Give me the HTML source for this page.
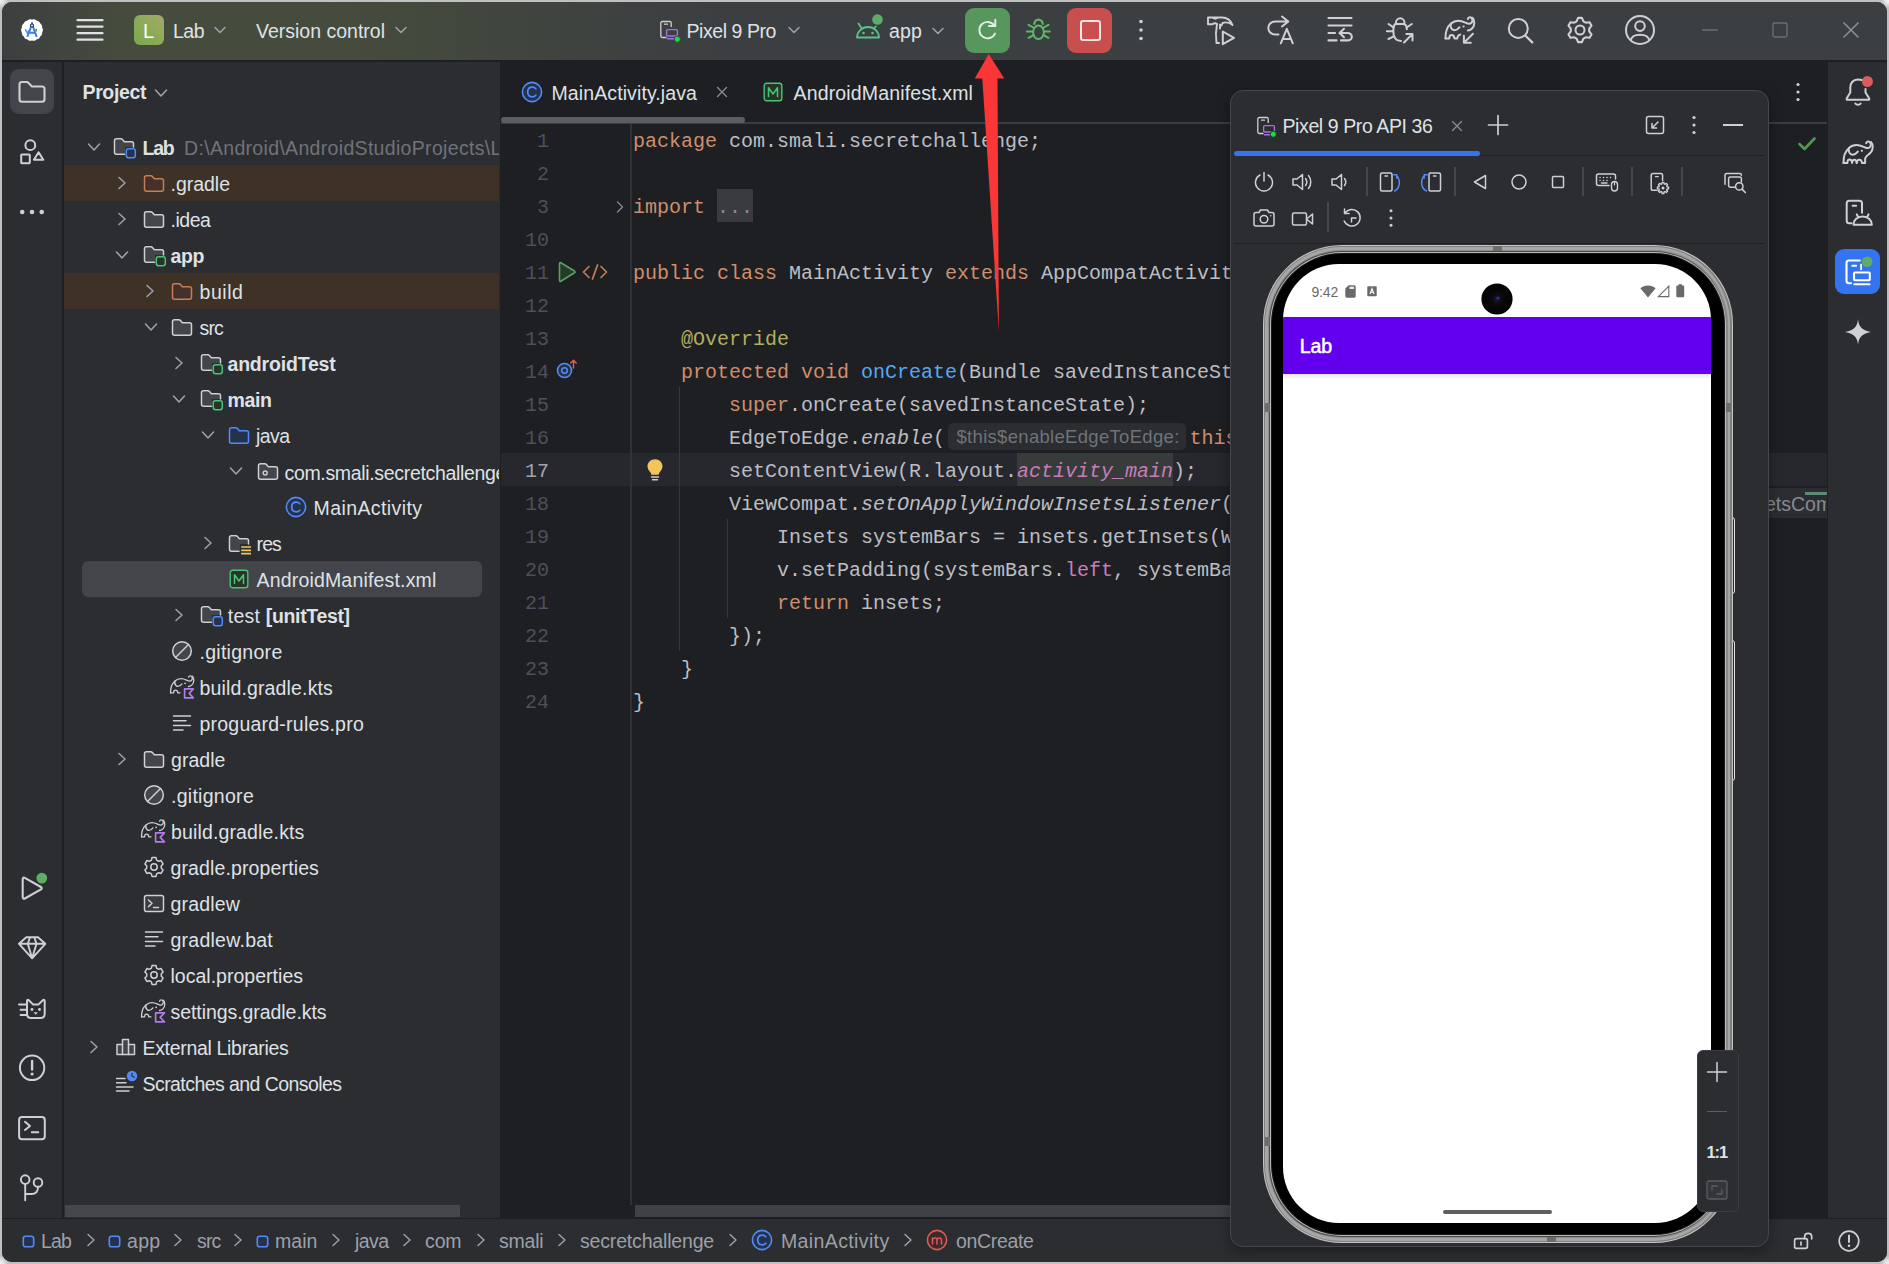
<!DOCTYPE html>
<html><head><meta charset="utf-8"><title>Lab - MainActivity.java</title><style>
html,body{margin:0;padding:0;}
body{width:1889px;height:1264px;overflow:hidden;background:radial-gradient(circle at 100% 0%,#f2f2f2 0,#f2f2f2 2px,rgba(194,194,194,0) 8px),radial-gradient(circle at 0% 0%,#ececec 0,#ececec 2px,rgba(194,194,194,0) 8px),radial-gradient(circle at 100% 100%,#ececec 0,#ececec 2px,rgba(194,194,194,0) 8px),radial-gradient(circle at 0% 100%,#ececec 0,#ececec 2px,rgba(194,194,194,0) 8px),#c0c0c0;font-family:"Liberation Sans",sans-serif;position:relative;}
#win{position:absolute;left:2px;top:2px;width:1885px;height:1260px;border-radius:10px;overflow:hidden;background:#2b2d30;}
#o{position:absolute;left:-2px;top:-2px;width:1889px;height:1264px;}
.t{position:absolute;white-space:pre;line-height:24px;height:24px;}
.b{position:absolute;}
.i{position:absolute;overflow:visible;}
.c{position:absolute;white-space:pre;font-family:"Liberation Mono",monospace;font-size:20px;line-height:33px;height:33px;color:#bcbec4;}
.k{color:#cf8e6d}.m{color:#56a8f5}.a{color:#b3ae60}.f{color:#c77dbb}.it{font-style:italic}
</style></head><body>
<div id="win"><div id="o">
<!-- part_bg -->
<div class="b" style="left:0px;top:0px;width:1889px;height:60px;background:linear-gradient(90deg,#3b3f40 0px,#40453f 60px,#454c3d 125px,#454c3d 330px,#41473e 480px,#3d4140 620px,#3c3f41 720px,#3c3f41 100%);"></div>
<div class="b" style="left:0px;top:60px;width:1889px;height:2px;background:#1e1f22;"></div>
<div class="b" style="left:0px;top:62px;width:62px;height:1157px;background:#2b2d30;"></div>
<div class="b" style="left:62px;top:62px;width:2px;height:1157px;background:#1e1f22;"></div>
<div class="b" style="left:64px;top:62px;width:436px;height:1157px;background:#2b2d30;"></div>
<div class="b" style="left:500px;top:62px;width:1px;height:1157px;background:#1e1f22;"></div>
<div class="b" style="left:501px;top:62px;width:1326px;height:1157px;background:#1e1f22;"></div>
<div class="b" style="left:1827px;top:62px;width:1px;height:1157px;background:#1e1f22;"></div>
<div class="b" style="left:1828px;top:62px;width:61px;height:1157px;background:#2b2d30;"></div>
<div class="b" style="left:0px;top:1218px;width:1889px;height:1px;background:#1e1f22;"></div>
<div class="b" style="left:0px;top:1219px;width:1889px;height:45px;background:#2b2d30;"></div>
<!-- part_title -->
<svg class="i" style="left:20px;top:18px;" width="24" height="24" viewBox="0 0 24 24" fill="none"><path d="M22.67 10.85 Q23.30 12.00 22.67 13.15 Q22.04 14.29 22.11 15.60 Q22.18 16.90 21.12 17.66 Q20.05 18.42 19.55 19.63 Q19.05 20.83 17.76 21.06 Q16.47 21.28 15.49 22.15 Q14.51 23.02 13.26 22.66 Q12.00 22.30 10.74 22.66 Q9.49 23.02 8.51 22.15 Q7.53 21.28 6.24 21.06 Q4.95 20.83 4.45 19.63 Q3.95 18.42 2.88 17.66 Q1.82 16.90 1.89 15.60 Q1.96 14.29 1.33 13.15 Q0.70 12.00 1.33 10.85 Q1.96 9.71 1.89 8.40 Q1.82 7.10 2.88 6.34 Q3.95 5.58 4.45 4.37 Q4.95 3.17 6.24 2.94 Q7.53 2.72 8.51 1.85 Q9.49 0.98 10.74 1.34 Q12.00 1.70 13.26 1.34 Q14.51 0.98 15.49 1.85 Q16.47 2.72 17.76 2.94 Q19.05 3.17 19.55 4.37 Q20.05 5.58 21.12 6.34 Q22.18 7.10 22.11 8.40 Q22.04 9.71 22.67 10.85 Z" fill="#fff"/>
<path d="M12 4.300 V6.300 M11.300 8 L7.300 18.800 M12.700 8 L16.700 18.800 M9 14.800 H15" stroke="#3b7cf0" stroke-width="2" stroke-linecap="butt"/>
<path d="M5.300 11.300 L7.600 15.300 L8.800 12.500" stroke="#4a8af5" stroke-width="1.500" fill="none"/>
<rect x="15.400" y="10.800" width="1.700" height="2.800" fill="#3dae4f"/>
<circle cx="12" cy="7.500" r="1.500" fill="#fff" stroke="#1f2a44" stroke-width="1.100"/></svg>
<svg class="i" style="left:76px;top:17px;" width="28" height="26" viewBox="0 0 28 26" fill="none"><path d="M1.500 3.2H26.500M1.500 9.700H26.500M1.500 16.200H26.500M1.500 22.700H26.500" stroke="#dfe1e5" stroke-width="2.200" stroke-linecap="round"/></svg>
<div class="b" style="left:134px;top:15px;width:30px;height:30px;background:linear-gradient(45deg,#7aa650 0%,#8dab57 50%,#a5a868 100%);border-radius:6px;"></div>
<div class="t" style="left:143px;top:18.5px;font-size:20px;color:#ffffff;">L</div>
<div class="t" style="left:173px;top:19px;font-size:19.5px;color:#dfe1e5;letter-spacing:-0.510px;">Lab</div>
<svg class="i" style="left:212px;top:22px;" width="16" height="16" viewBox="0 0 16 16" fill="none"><path d="M3 5.5 L8 10.5 L13 5.5" stroke="#9da0a8" stroke-width="1.6" stroke-linecap="round" stroke-linejoin="round"/></svg>
<div class="t" style="left:256px;top:19px;font-size:19.5px;color:#dfe1e5;letter-spacing:0.001px;">Version control</div>
<svg class="i" style="left:393px;top:22px;" width="16" height="16" viewBox="0 0 16 16" fill="none"><path d="M3 5.5 L8 10.5 L13 5.5" stroke="#9da0a8" stroke-width="1.6" stroke-linecap="round" stroke-linejoin="round"/></svg>
<svg class="i" style="left:658px;top:19px;" width="22" height="22" viewBox="0 0 22 22" fill="none"><path d="M8.5 18.500H4.200a1.400 1.400 0 0 1-1.400-1.400V3.900a1.400 1.400 0 0 1 1.400-1.400h7.600a1.400 1.400 0 0 1 1.400 1.400V8" stroke="#ced0d6" stroke-width="1.300" fill="none"/>
<path d="M6.5 5.200h3" stroke="#ced0d6" stroke-width="1.300" stroke-linecap="round"/>
<rect x="8.600" y="10.600" width="10.800" height="6.400" rx="1.200" stroke="#a571e6" stroke-width="1.400" fill="#3c3f41"/>
<path d="M9.500 19.700h9" stroke="#a571e6" stroke-width="1.400" stroke-linecap="round"/>
<circle cx="19.300" cy="20.200" r="3.100" fill="#14e03c" stroke="#3c3f41" stroke-width="1"/></svg>
<div class="t" style="left:686.5px;top:19px;font-size:19.5px;color:#dfe1e5;letter-spacing:-0.435px;">Pixel 9 Pro</div>
<svg class="i" style="left:786px;top:22px;" width="16" height="16" viewBox="0 0 16 16" fill="none"><path d="M3 5.5 L8 10.5 L13 5.5" stroke="#9da0a8" stroke-width="1.6" stroke-linecap="round" stroke-linejoin="round"/></svg>
<svg class="i" style="left:853px;top:16px;" width="30" height="26" viewBox="0 0 30 26" fill="none"><path d="M4 21.500 a11 10.500 0 0 1 22 0 Z" stroke="#55c38a" stroke-width="1.800" fill="none" stroke-linejoin="round"/>
<path d="M8 11.500 L5.500 7.500 M22 11.500 L24.500 7.500" stroke="#55c38a" stroke-width="1.800" stroke-linecap="round"/>
<circle cx="10.500" cy="17" r="1.300" fill="#55c38a"/><circle cx="19.500" cy="17" r="1.300" fill="#55c38a"/>
<circle cx="24.500" cy="3.500" r="6.600" fill="#3c3f41"/><circle cx="24.500" cy="3.500" r="5.300" fill="#5fad65"/></svg>
<div class="t" style="left:889px;top:19px;font-size:19.5px;color:#dfe1e5;letter-spacing:0.156px;">app</div>
<svg class="i" style="left:930px;top:22.5px;" width="16" height="16" viewBox="0 0 16 16" fill="none"><path d="M3 5.5 L8 10.5 L13 5.5" stroke="#9da0a8" stroke-width="1.6" stroke-linecap="round" stroke-linejoin="round"/></svg>
<div class="b" style="left:965px;top:7.5px;width:45px;height:45px;background:#57965c;border-radius:9px;"></div>
<svg class="i" style="left:970px;top:12px" width="36" height="36" viewBox="970 12 36 36" fill="none"><path d="M995 33.600 A8.200 8.200 0 1 1 994.300 25.400" stroke="#e3ede4" stroke-width="1.900" fill="none" stroke-linecap="round"/><path d="M995.300 19.800 V26 H989" stroke="#e3ede4" stroke-width="1.900" fill="none" stroke-linecap="round" stroke-linejoin="miter"/></svg>
<svg class="i" style="left:1020px;top:10px" width="40" height="42" viewBox="1020 10 40 42" fill="none"><ellipse cx="1038.500" cy="32.300" rx="5.400" ry="6.700" stroke="#5fb865" stroke-width="2"/><path d="M1034.200 24.800 C1034.200 17.800 1042.800 17.800 1042.800 24.800" stroke="#5fb865" stroke-width="2.200" fill="none"/><path d="M1028.500 24.800 L1033.300 27.500 M1048.500 24.800 L1043.700 27.500 M1027 31.500 H1032.800 M1044.200 31.500 H1049.800 M1028.500 37.800 L1033.500 35.200 M1048.500 37.800 L1043.500 35.200" stroke="#5fb865" stroke-width="2" stroke-linecap="round"/></svg>
<div class="b" style="left:1067px;top:7.5px;width:45px;height:45px;background:#c94f4f;border-radius:9px;"></div>
<div class="b" style="left:1079.5px;top:19.5px;width:21px;height:21px;background:transparent;border:2px solid #f5e6e6;border-radius:3px;box-sizing:border-box;"></div>
<svg class="i" style="left:1137.5px;top:17px;" width="6" height="26" viewBox="0 0 6 26" fill="none"><circle cx="3" cy="4.500" r="1.800" fill="#ced0d6"/><circle cx="3" cy="13" r="1.800" fill="#ced0d6"/><circle cx="3" cy="21.500" r="1.800" fill="#ced0d6"/></svg>
<!-- part_title2 -->
<svg class="i" style="left:1200px;top:10px" width="45" height="42" viewBox="1200 10 45 42" fill="none"><path d="M1208 17.500 H1222 C1227 17.500 1230.500 20 1232.500 25 C1229.500 22.500 1226 21.800 1222.500 23 L1221.500 25.500 M1208 17.500 V24.200 H1212.500 C1214 23 1215.500 23 1217 24 M1213 17.800 C1214.500 19 1216 19 1217.500 17.800 M1217 24 C1216 29 1215.500 36 1216.500 43 H1219 M1220 24.500 V28.500" stroke="#ced0d6" stroke-width="1.9" stroke-linecap="round" stroke-linejoin="round" fill="none" /><path d="M1222.800 31.500 L1234 37.800 L1222.800 44.200 Z" stroke="#ced0d6" stroke-width="2" stroke-linecap="round" stroke-linejoin="round" fill="none" /></svg>
<svg class="i" style="left:1260px;top:10px" width="40" height="42" viewBox="1260 10 40 42" fill="none"><path d="M1278.500 34.500 H1275 C1271 34.500 1268.300 31.500 1268.300 28 C1268.300 24.500 1271 21.500 1275 21.500 H1288 M1282 16.500 L1288.300 21.500 L1282 26.500" stroke="#ced0d6" stroke-width="2" stroke-linecap="round" stroke-linejoin="round" fill="none" /><path d="M1280.800 43.300 L1286.800 28.800 L1292.800 43.300 M1283 39 H1290.600" stroke="#ced0d6" stroke-width="2" stroke-linecap="round" stroke-linejoin="round" fill="none" /></svg>
<svg class="i" style="left:1320px;top:10px" width="40" height="42" viewBox="1320 10 40 42" fill="none"><path d="M1328.500 18 H1351.500 M1328.500 25.500 H1351.500 M1328.500 33 H1335 M1328.500 40.400 H1336.500" stroke="#ced0d6" stroke-width="2.2" stroke-linecap="round" stroke-linejoin="round" fill="none" /><path d="M1344 28.800 L1339.500 33 L1344 37.200 M1339.800 33 H1347.500 C1350 33 1351.800 34.600 1351.800 36.700 C1351.800 38.800 1350 40.400 1347.500 40.400 H1341" stroke="#ced0d6" stroke-width="2.1" stroke-linecap="round" stroke-linejoin="round" fill="none" /></svg>
<svg class="i" style="left:1380px;top:10px" width="40" height="42" viewBox="1380 10 40 42" fill="none"><path d="M1395.800 23.500 C1395.800 16.500 1404.600 16.500 1404.600 23.500 M1395.300 24 H1403 C1405.500 24 1406.800 26 1406.800 29.300 M1395.300 24 C1393.800 25.500 1393.300 27.500 1393.300 31 C1393.300 37.500 1396 41 1401 41" stroke="#ced0d6" stroke-width="2" stroke-linecap="round" stroke-linejoin="round" fill="none" /><path d="M1388.500 24 L1393.500 27.300 M1386.800 31.300 H1393 M1388.500 39 L1393.800 36.300 M1411.800 24 L1407 27.300" stroke="#ced0d6" stroke-width="2" stroke-linecap="round" stroke-linejoin="round" fill="none" /><path d="M1404 42.500 L1412.500 34 M1406.300 34 H1412.500 V40.500" stroke="#ced0d6" stroke-width="2" stroke-linecap="round" stroke-linejoin="round" fill="none" /></svg>
<svg class="i" style="left:1440px;top:10px" width="40" height="42" viewBox="1440 10 40 42" fill="none"><path d="M1445.500 38.400 C1445.300 31.500 1447.500 26.500 1451 23.600 C1454.500 20.300 1460 20 1465.400 22.600 C1467.500 23.700 1470 24.300 1471.500 22.800 C1473.300 21 1472.300 17.500 1470.200 17.300 C1468.800 17.200 1468 18 1467.800 19" stroke="#ced0d6" stroke-width="2" stroke-linecap="round" stroke-linejoin="round" fill="none" /><path d="M1472.500 17.800 C1475 20 1475 25.500 1472 28.500 C1470.800 29.700 1469.300 30.400 1467.800 30.500" stroke="#ced0d6" stroke-width="2" stroke-linecap="round" stroke-linejoin="round" fill="none" /><path d="M1451 23.600 C1450.300 26 1451 28.500 1452.600 29.700 C1454.800 31 1457.500 29.800 1459.600 27.200" stroke="#ced0d6" stroke-width="2" stroke-linecap="round" stroke-linejoin="round" fill="none" /><path d="M1445.500 38.400 H1449.300 C1449.300 36.500 1450.300 35 1451.600 35 C1453 35 1454.300 36.500 1454.500 38.400 H1457.200 C1457.500 36.300 1458.600 35 1460.200 34.600" stroke="#ced0d6" stroke-width="2" stroke-linecap="round" stroke-linejoin="round" fill="none" /><circle cx="1463.600" cy="26.500" r="1.100" fill="#ced0d6"/><path d="M1473 33.800 L1464 42.600 M1463.900 35.800 V42.700 H1470.800" stroke="#ced0d6" stroke-width="2" stroke-linecap="round" stroke-linejoin="round" fill="none" /></svg>
<svg class="i" style="left:1500px;top:10px" width="40" height="42" viewBox="1500 10 40 42" fill="none"><circle cx="1518.300" cy="28.400" r="9.500" stroke="#ced0d6" stroke-width="2"/><path d="M1525.200 35.500 L1532.300 42.400" stroke="#ced0d6" stroke-width="2.2" stroke-linecap="round" stroke-linejoin="round" fill="none" /></svg>
<svg class="i" style="left:1560px;top:10px" width="40" height="42" viewBox="1560 10 40 42" fill="none"><path d="M1578.08 17.85 L1581.92 17.85 L1583.42 21.35 L1585.78 22.71 L1589.56 22.26 L1591.48 25.59 L1589.20 28.64 L1589.20 31.36 L1591.48 34.41 L1589.56 37.74 L1585.78 37.29 L1583.42 38.65 L1581.92 42.15 L1578.08 42.15 L1576.58 38.65 L1574.22 37.29 L1570.44 37.74 L1568.52 34.41 L1570.80 31.36 L1570.80 28.64 L1568.52 25.59 L1570.44 22.26 L1574.22 22.71 L1576.58 21.35 Z" stroke="#ced0d6" stroke-width="2.1" stroke-linecap="round" stroke-linejoin="round" fill="none" /><circle cx="1580" cy="30" r="4.500" stroke="#ced0d6" stroke-width="2"/></svg>
<svg class="i" style="left:1620px;top:10px" width="40" height="42" viewBox="1620 10 40 42" fill="none"><circle cx="1640" cy="30" r="14" stroke="#ced0d6" stroke-width="2"/><circle cx="1640" cy="26.100" r="4.800" stroke="#ced0d6" stroke-width="2"/><path d="M1630.800 40 C1632.500 33 1647.500 33 1649.200 40" stroke="#ced0d6" stroke-width="2" stroke-linecap="round" stroke-linejoin="round" fill="none" /></svg>
<svg class="i" style="left:1701px;top:21px;" width="18" height="18" viewBox="0 0 18 18" fill="none"><path d="M1 9H17" stroke="#6b6e73" stroke-width="1.300"/></svg>
<svg class="i" style="left:1771px;top:21px;" width="18" height="18" viewBox="0 0 18 18" fill="none"><rect x="2" y="2" width="14" height="14" rx="1.500" stroke="#6b6e73" stroke-width="1.300"/></svg>
<svg class="i" style="left:1842px;top:21px;" width="18" height="18" viewBox="0 0 18 18" fill="none"><path d="M1.500 1.500L16.500 16.500M16.500 1.500L1.500 16.500" stroke="#8e9093" stroke-width="1.500"/></svg>
<!-- part_left -->
<div class="b" style="left:10px;top:69px;width:44px;height:45px;background:#43454a;border-radius:9px;"></div>
<svg class="i" style="left:12px;top:72px" width="40" height="40" viewBox="12 72 40 40" fill="none"><path d="M19.500 84.500 C19.500 83 20.500 82 22 82 H27.500 L32 86.500 H42 C43.500 86.500 44.500 87.500 44.500 89 V99.200 C44.500 100.700 43.500 101.700 42 101.700 H22 C20.500 101.700 19.500 100.700 19.500 99.200 Z" stroke="#ced0d6" stroke-width="2.1" stroke-linecap="round" stroke-linejoin="round" fill="none" /></svg>
<svg class="i" style="left:12px;top:132px" width="40" height="40" viewBox="12 132 40 40" fill="none"><circle cx="30.300" cy="145.200" r="4.900" stroke="#ced0d6" stroke-width="2"/><rect x="21.200" y="154.600" width="8.600" height="8.600" rx="0.600" stroke="#ced0d6" stroke-width="2"/><path d="M38.600 152.300 L43.300 159.800 H33.900 Z" stroke="#ced0d6" stroke-width="2" stroke-linecap="round" stroke-linejoin="round" fill="none" /></svg>
<svg class="i" style="left:12px;top:202px" width="40" height="20" viewBox="12 202 40 20" fill="none"><circle cx="22.200" cy="212" r="2.300" fill="#ced0d6"/><circle cx="32" cy="212" r="2.300" fill="#ced0d6"/><circle cx="41.700" cy="212" r="2.300" fill="#ced0d6"/></svg>
<svg class="i" style="left:12px;top:868px" width="40" height="40" viewBox="12 868 40 40" fill="none"><path d="M22.700 879 C22.700 877.800 23.800 877.200 24.800 877.800 L41 887 C42 887.600 42 888.700 41 889.300 L24.800 898.500 C23.800 899.100 22.700 898.500 22.700 897.300 Z" stroke="#ced0d6" stroke-width="2.1" stroke-linecap="round" stroke-linejoin="round" fill="none" /><circle cx="41.800" cy="878.100" r="6.800" fill="#2b2d30"/><circle cx="41.800" cy="878.100" r="5.400" fill="#5fad65"/></svg>
<svg class="i" style="left:12px;top:928px" width="40" height="40" viewBox="12 928 40 40" fill="none"><path d="M19 943.800 L26.300 937.200 H38 L45.300 943.800 L32.100 958.300 Z M19 943.800 H45.300 M27.800 943.800 L30 937.200 M36.500 943.800 L34.300 937.200 M27.800 943.800 L32.100 958.300 L36.500 943.800" stroke="#ced0d6" stroke-width="1.9" stroke-linecap="round" stroke-linejoin="round" fill="none" /></svg>
<svg class="i" style="left:12px;top:990px" width="40" height="40" viewBox="12 990 40 40" fill="none"><path d="M27 1015 V1001 C27 999.800 28 999.400 28.800 1000.200 L33.200 1004.600 H38.300 L42.800 1000.200 C43.600 999.400 44.700 999.800 44.700 1001 V1014 C44.700 1016.500 43 1018 40.500 1018 H31 C28.500 1018 27 1016.500 27 1014" stroke="#ced0d6" stroke-width="2" stroke-linecap="round" stroke-linejoin="round" fill="none" /><path d="M19 1004.600 H27 M20.600 1009.800 H27 M20.600 1015 H27" stroke="#ced0d6" stroke-width="2" stroke-linecap="round" stroke-linejoin="round" fill="none" /><circle cx="32" cy="1009.500" r="1.400" fill="#ced0d6"/><circle cx="39.500" cy="1009.500" r="1.400" fill="#ced0d6"/><path d="M33.600 1012.300 H37.800 L35.700 1014.800 Z" fill="#ced0d6"/></svg>
<svg class="i" style="left:12px;top:1048px" width="40" height="40" viewBox="12 1048 40 40" fill="none"><circle cx="32.100" cy="1067.800" r="12.200" stroke="#ced0d6" stroke-width="2"/><path d="M32.100 1061 V1069.500" stroke="#ced0d6" stroke-width="2.4" stroke-linecap="round" stroke-linejoin="round" fill="none" /><circle cx="32.100" cy="1074" r="1.600" fill="#ced0d6"/></svg>
<svg class="i" style="left:12px;top:1108px" width="40" height="40" viewBox="12 1108 40 40" fill="none"><rect x="19.100" y="1117" width="25.700" height="22.200" rx="3" stroke="#ced0d6" stroke-width="2"/><path d="M25 1121.800 L30 1126 L25 1130 M31.800 1132.200 H38.300" stroke="#ced0d6" stroke-width="2" stroke-linecap="round" stroke-linejoin="round" fill="none" /></svg>
<svg class="i" style="left:12px;top:1168px" width="40" height="40" viewBox="12 1168 40 40" fill="none"><circle cx="25.200" cy="1179.600" r="4.300" stroke="#ced0d6" stroke-width="1.900"/><circle cx="38" cy="1182.500" r="4.300" stroke="#ced0d6" stroke-width="1.900"/><path d="M25.200 1184 V1200.300 M38 1187 C38 1191 36 1194 31.500 1194 H25.200" stroke="#ced0d6" stroke-width="1.9" stroke-linecap="round" stroke-linejoin="round" fill="none" /></svg>
<!-- part_tree -->
<div class="t" style="left:82.5px;top:80px;font-size:19.5px;color:#dfe1e5;font-weight:bold;letter-spacing:-0.373px;">Project</div>
<svg class="i" style="left:153px;top:86.5px;" width="16" height="12" viewBox="0 0 16 12" fill="none"><path d="M2.500 3 L8 9 L13.500 3" stroke="#9da0a8" stroke-width="1.6" stroke-linecap="round" stroke-linejoin="round" fill="none" /></svg>
<div class="b" style="left:64px;top:165px;width:436px;height:36px;background:#3d3225;"></div>
<div class="b" style="left:64px;top:273px;width:436px;height:36px;background:#3d3225;"></div>
<div class="b" style="left:82px;top:561px;width:400px;height:36px;background:#43454a;border-radius:6px;"></div>
<svg class="i" style="left:86px;top:141px;" width="16" height="12" viewBox="0 0 16 12" fill="none"><path d="M2.500 3 L8 9 L13.500 3" stroke="#9da0a8" stroke-width="1.6" stroke-linecap="round" stroke-linejoin="round" fill="none" /></svg>
<svg class="i" style="left:113.3px;top:137.2px;" width="22" height="19" viewBox="0 0 22 19" fill="none"><path d="M2.200 3 H8 L11 5.500 H19.800 V10 H12 V16.500 H2.200 Z" fill="#43454a"/><path d="M11.500 17.200 H3.500 C2.300 17.200 1.500 16.400 1.500 15.200 V3.800 C1.500 2.600 2.300 1.800 3.500 1.800 H7.800 C8.500 1.800 9 2 9.400 2.500 L11.300 4.800 H18.500 C19.700 4.800 20.500 5.600 20.500 6.800 V10" stroke="#ced0d6" stroke-width="1.5" stroke-linecap="round" stroke-linejoin="round" fill="none" /><rect x="13.300" y="11.800" width="9" height="9" rx="2.200" stroke="#548af7" stroke-width="1.500" fill="#25324d"/></svg>
<div class="t" style="left:142.5px;top:136px;font-size:19.5px;color:#dfe1e5;font-weight:bold;letter-spacing:-1.219px;">Lab</div>
<div class="b" style="left:184px;top:134px;width:316px;height:28px;overflow:hidden"><div class="t" style="left:0px;top:2px;font-size:19.5px;color:#6f737a;letter-spacing:0.322px;">D:\Android\AndroidStudioProjects\Lab</div></div>
<svg class="i" style="left:115.5px;top:175px;" width="12" height="16" viewBox="0 0 12 16" fill="none"><path d="M3 2.500 L9 8 L3 13.500" stroke="#9da0a8" stroke-width="1.6" stroke-linecap="round" stroke-linejoin="round" fill="none" /></svg>
<svg class="i" style="left:143px;top:173.5px;" width="22" height="19" viewBox="0 0 22 19" fill="none"><path d="M1.500 3.800 C1.500 2.600 2.300 1.800 3.500 1.800 H7.800 C8.500 1.800 9 2 9.400 2.500 L11.300 4.800 H18.500 C19.700 4.800 20.500 5.600 20.500 6.800 V15.200 C20.500 16.400 19.700 17.200 18.500 17.200 H3.500 C2.300 17.200 1.500 16.400 1.500 15.200 Z" stroke="#c77d55" stroke-width="1.5" stroke-linecap="round" stroke-linejoin="round" fill="#45302b" /></svg>
<div class="t" style="left:170.5px;top:172px;font-size:19.5px;color:#dfe1e5;letter-spacing:-0.018px;">.gradle</div>
<svg class="i" style="left:115.5px;top:211px;" width="12" height="16" viewBox="0 0 12 16" fill="none"><path d="M3 2.500 L9 8 L3 13.500" stroke="#9da0a8" stroke-width="1.6" stroke-linecap="round" stroke-linejoin="round" fill="none" /></svg>
<svg class="i" style="left:143px;top:209.5px;" width="22" height="19" viewBox="0 0 22 19" fill="none"><path d="M1.500 3.800 C1.500 2.600 2.300 1.800 3.500 1.800 H7.800 C8.500 1.800 9 2 9.400 2.500 L11.300 4.800 H18.500 C19.700 4.800 20.500 5.600 20.500 6.800 V15.200 C20.500 16.400 19.700 17.200 18.500 17.200 H3.500 C2.300 17.200 1.500 16.400 1.500 15.200 Z" stroke="#ced0d6" stroke-width="1.5" stroke-linecap="round" stroke-linejoin="round" fill="#43454a" /></svg>
<div class="t" style="left:170.5px;top:208px;font-size:19.5px;color:#dfe1e5;letter-spacing:-0.456px;">.idea</div>
<svg class="i" style="left:114px;top:249px;" width="16" height="12" viewBox="0 0 16 12" fill="none"><path d="M2.500 3 L8 9 L13.500 3" stroke="#9da0a8" stroke-width="1.6" stroke-linecap="round" stroke-linejoin="round" fill="none" /></svg>
<svg class="i" style="left:143px;top:245.2px;" width="22" height="19" viewBox="0 0 22 19" fill="none"><path d="M2.200 3 H8 L11 5.500 H19.800 V10 H12 V16.500 H2.200 Z" fill="#43454a"/><path d="M11.500 17.200 H3.500 C2.300 17.200 1.500 16.400 1.500 15.200 V3.800 C1.500 2.600 2.300 1.800 3.500 1.800 H7.800 C8.500 1.800 9 2 9.400 2.500 L11.300 4.800 H18.500 C19.700 4.800 20.500 5.600 20.500 6.800 V10" stroke="#ced0d6" stroke-width="1.5" stroke-linecap="round" stroke-linejoin="round" fill="none" /><rect x="13.300" y="11.800" width="9" height="9" rx="2.200" stroke="#4cc27a" stroke-width="1.500" fill="#253627"/></svg>
<div class="t" style="left:170.5px;top:244px;font-size:19.5px;color:#dfe1e5;font-weight:bold;letter-spacing:-0.385px;">app</div>
<svg class="i" style="left:144px;top:283px;" width="12" height="16" viewBox="0 0 12 16" fill="none"><path d="M3 2.500 L9 8 L3 13.500" stroke="#9da0a8" stroke-width="1.6" stroke-linecap="round" stroke-linejoin="round" fill="none" /></svg>
<svg class="i" style="left:171px;top:281.5px;" width="22" height="19" viewBox="0 0 22 19" fill="none"><path d="M1.500 3.800 C1.500 2.600 2.300 1.800 3.500 1.800 H7.800 C8.500 1.800 9 2 9.400 2.500 L11.300 4.800 H18.500 C19.700 4.800 20.500 5.600 20.500 6.800 V15.200 C20.500 16.400 19.700 17.200 18.500 17.200 H3.500 C2.300 17.200 1.500 16.400 1.500 15.200 Z" stroke="#c77d55" stroke-width="1.5" stroke-linecap="round" stroke-linejoin="round" fill="#45302b" /></svg>
<div class="t" style="left:199.5px;top:280px;font-size:19.5px;color:#dfe1e5;letter-spacing:0.562px;">build</div>
<svg class="i" style="left:142.5px;top:321px;" width="16" height="12" viewBox="0 0 16 12" fill="none"><path d="M2.500 3 L8 9 L13.500 3" stroke="#9da0a8" stroke-width="1.6" stroke-linecap="round" stroke-linejoin="round" fill="none" /></svg>
<svg class="i" style="left:171px;top:317.5px;" width="22" height="19" viewBox="0 0 22 19" fill="none"><path d="M1.500 3.800 C1.500 2.600 2.300 1.800 3.500 1.800 H7.800 C8.500 1.800 9 2 9.400 2.500 L11.300 4.800 H18.500 C19.700 4.800 20.500 5.600 20.500 6.800 V15.200 C20.500 16.400 19.700 17.200 18.500 17.200 H3.500 C2.300 17.200 1.500 16.400 1.500 15.200 Z" stroke="#ced0d6" stroke-width="1.5" stroke-linecap="round" stroke-linejoin="round" fill="#43454a" /></svg>
<div class="t" style="left:199.5px;top:316px;font-size:19.5px;color:#dfe1e5;letter-spacing:-0.833px;">src</div>
<svg class="i" style="left:172.5px;top:355px;" width="12" height="16" viewBox="0 0 12 16" fill="none"><path d="M3 2.500 L9 8 L3 13.500" stroke="#9da0a8" stroke-width="1.6" stroke-linecap="round" stroke-linejoin="round" fill="none" /></svg>
<svg class="i" style="left:200px;top:353.2px;" width="22" height="19" viewBox="0 0 22 19" fill="none"><path d="M2.200 3 H8 L11 5.500 H19.800 V10 H12 V16.500 H2.200 Z" fill="#43454a"/><path d="M11.500 17.200 H3.500 C2.300 17.200 1.500 16.400 1.500 15.200 V3.800 C1.500 2.600 2.300 1.800 3.500 1.800 H7.800 C8.500 1.800 9 2 9.400 2.500 L11.300 4.800 H18.500 C19.700 4.800 20.500 5.600 20.500 6.800 V10" stroke="#ced0d6" stroke-width="1.5" stroke-linecap="round" stroke-linejoin="round" fill="none" /><rect x="13.300" y="11.800" width="9" height="9" rx="2.200" stroke="#4cc27a" stroke-width="1.500" fill="#253627"/></svg>
<div class="t" style="left:227.5px;top:352px;font-size:19.5px;color:#dfe1e5;font-weight:bold;letter-spacing:-0.193px;">androidTest</div>
<svg class="i" style="left:171px;top:393px;" width="16" height="12" viewBox="0 0 16 12" fill="none"><path d="M2.500 3 L8 9 L13.500 3" stroke="#9da0a8" stroke-width="1.6" stroke-linecap="round" stroke-linejoin="round" fill="none" /></svg>
<svg class="i" style="left:200px;top:389.2px;" width="22" height="19" viewBox="0 0 22 19" fill="none"><path d="M2.200 3 H8 L11 5.500 H19.800 V10 H12 V16.500 H2.200 Z" fill="#43454a"/><path d="M11.500 17.200 H3.500 C2.300 17.200 1.500 16.400 1.500 15.200 V3.800 C1.500 2.600 2.300 1.800 3.500 1.800 H7.800 C8.500 1.800 9 2 9.400 2.500 L11.300 4.800 H18.500 C19.700 4.800 20.500 5.600 20.500 6.800 V10" stroke="#ced0d6" stroke-width="1.5" stroke-linecap="round" stroke-linejoin="round" fill="none" /><rect x="13.300" y="11.800" width="9" height="9" rx="2.200" stroke="#4cc27a" stroke-width="1.500" fill="#253627"/></svg>
<div class="t" style="left:227.5px;top:388px;font-size:19.5px;color:#dfe1e5;font-weight:bold;letter-spacing:-0.379px;">main</div>
<svg class="i" style="left:199.5px;top:429px;" width="16" height="12" viewBox="0 0 16 12" fill="none"><path d="M2.500 3 L8 9 L13.500 3" stroke="#9da0a8" stroke-width="1.6" stroke-linecap="round" stroke-linejoin="round" fill="none" /></svg>
<svg class="i" style="left:228px;top:425.5px;" width="22" height="19" viewBox="0 0 22 19" fill="none"><path d="M1.500 3.800 C1.500 2.600 2.300 1.800 3.500 1.800 H7.800 C8.500 1.800 9 2 9.400 2.500 L11.300 4.800 H18.500 C19.700 4.800 20.500 5.600 20.500 6.800 V15.200 C20.500 16.400 19.700 17.200 18.500 17.200 H3.500 C2.300 17.200 1.500 16.400 1.500 15.200 Z" stroke="#548af7" stroke-width="1.5" stroke-linecap="round" stroke-linejoin="round" fill="#25324d" /></svg>
<div class="t" style="left:256px;top:424px;font-size:19.5px;color:#dfe1e5;letter-spacing:-0.566px;">java</div>
<svg class="i" style="left:228px;top:465px;" width="16" height="12" viewBox="0 0 16 12" fill="none"><path d="M2.500 3 L8 9 L13.500 3" stroke="#9da0a8" stroke-width="1.6" stroke-linecap="round" stroke-linejoin="round" fill="none" /></svg>
<svg class="i" style="left:257px;top:461.5px;" width="22" height="19" viewBox="0 0 22 19" fill="none"><path d="M1.500 3.800 C1.500 2.600 2.300 1.800 3.500 1.800 H7.800 C8.500 1.800 9 2 9.400 2.500 L11.300 4.800 H18.500 C19.700 4.800 20.500 5.600 20.500 6.800 V15.200 C20.500 16.400 19.700 17.200 18.500 17.200 H3.500 C2.300 17.200 1.500 16.400 1.500 15.200 Z" stroke="#ced0d6" stroke-width="1.5" stroke-linecap="round" stroke-linejoin="round" fill="#43454a" /><circle cx="8.200" cy="11" r="2" stroke="#ced0d6" stroke-width="1.400"/></svg>
<div class="b" style="left:284px;top:458px;width:216px;height:28px;overflow:hidden"><div class="t" style="left:0.5px;top:3px;font-size:19.5px;color:#dfe1e5;letter-spacing:-0.331px;">com.smali.secretchallenge</div></div>
<svg class="i" style="left:285px;top:496px;" width="22" height="22" viewBox="0 0 22 22" fill="none"><circle cx="11" cy="11" r="9.600" stroke="#548af7" stroke-width="1.600" fill="#25324d"/><path d="M14.800 7.800 C13.800 6.600 12.600 6.200 11.300 6.200 C8.500 6.200 6.700 8.200 6.700 11 C6.700 13.800 8.500 15.800 11.300 15.800 C12.600 15.800 13.800 15.400 14.800 14.200" stroke="#548af7" stroke-width="1.7" stroke-linecap="round" stroke-linejoin="round" fill="none" /></svg>
<div class="t" style="left:313.5px;top:496px;font-size:19.5px;color:#dfe1e5;letter-spacing:0.415px;">MainActivity</div>
<svg class="i" style="left:201.5px;top:535px;" width="12" height="16" viewBox="0 0 12 16" fill="none"><path d="M3 2.500 L9 8 L3 13.500" stroke="#9da0a8" stroke-width="1.6" stroke-linecap="round" stroke-linejoin="round" fill="none" /></svg>
<svg class="i" style="left:227.5px;top:533.5px;" width="24" height="21" viewBox="0 0 24 21" fill="none"><path d="M2.200 3 H8 L11 5.500 H19.800 V10 H12 V16.500 H2.200 Z" fill="#43454a"/><path d="M11 17.200 H3.500 C2.300 17.200 1.500 16.400 1.500 15.200 V3.800 C1.500 2.600 2.300 1.800 3.500 1.800 H7.800 C8.500 1.800 9 2 9.400 2.500 L11.300 4.800 H18.500 C19.700 4.800 20.500 5.600 20.500 6.800 V10" stroke="#ced0d6" stroke-width="1.5" stroke-linecap="round" stroke-linejoin="round" fill="none" /><path d="M13.200 13 H23 M13.200 16.300 H23 M13.200 19.600 H23" stroke="#f2c55c" stroke-width="1.700"/></svg>
<div class="t" style="left:256.5px;top:532px;font-size:19.5px;color:#dfe1e5;letter-spacing:-0.865px;">res</div>
<svg class="i" style="left:229px;top:569px;" width="20" height="20" viewBox="0 0 20 20" fill="none"><rect x="1.200" y="1.200" width="17.600" height="17.600" rx="2.500" stroke="#4cc27a" stroke-width="1.400" fill="#253627"/><path d="M5.500 14.500 V5.800 L10 12 L14.500 5.800 V14.500" stroke="#4cc27a" stroke-width="1.5" stroke-linecap="round" stroke-linejoin="round" fill="none" /></svg>
<div class="t" style="left:256.5px;top:568px;font-size:19.5px;color:#dfe1e5;letter-spacing:0.176px;">AndroidManifest.xml</div>
<svg class="i" style="left:172.5px;top:607px;" width="12" height="16" viewBox="0 0 12 16" fill="none"><path d="M3 2.500 L9 8 L3 13.500" stroke="#9da0a8" stroke-width="1.6" stroke-linecap="round" stroke-linejoin="round" fill="none" /></svg>
<svg class="i" style="left:200px;top:605.2px;" width="22" height="19" viewBox="0 0 22 19" fill="none"><path d="M2.200 3 H8 L11 5.500 H19.800 V10 H12 V16.500 H2.200 Z" fill="#43454a"/><path d="M11.500 17.200 H3.500 C2.300 17.200 1.500 16.400 1.500 15.200 V3.800 C1.500 2.600 2.300 1.800 3.500 1.800 H7.800 C8.500 1.800 9 2 9.400 2.500 L11.300 4.800 H18.500 C19.700 4.800 20.500 5.600 20.500 6.800 V10" stroke="#ced0d6" stroke-width="1.5" stroke-linecap="round" stroke-linejoin="round" fill="none" /><rect x="13.300" y="11.800" width="9" height="9" rx="2.200" stroke="#548af7" stroke-width="1.500" fill="#25324d"/></svg>
<div class="t" style="left:227.8px;top:604px;font-size:19.5px;color:#dfe1e5;letter-spacing:0.228px;">test </div>
<div class="t" style="left:265.8px;top:604px;font-size:19.5px;color:#dfe1e5;font-weight:bold;letter-spacing:-0.348px;">[unitTest]</div>
<svg class="i" style="left:171px;top:640px;" width="22" height="22" viewBox="0 0 22 22" fill="none"><circle cx="11" cy="11" r="9.300" stroke="#ced0d6" stroke-width="1.500" fill="#43454a"/><path d="M4.500 17.500 L17.500 4.500" stroke="#ced0d6" stroke-width="1.5" stroke-linecap="round" stroke-linejoin="round" fill="none" /></svg>
<div class="t" style="left:199.5px;top:640px;font-size:19.5px;color:#dfe1e5;letter-spacing:0.278px;">.gitignore</div>
<svg class="i" style="left:167.5px;top:674px" width="30" height="28" viewBox="167.5 674 30 28" fill="none"><path d="M1445.500 38.400 C1445.300 31.500 1447.500 26.500 1451 23.600 C1454.500 20.300 1460 20 1465.400 22.600 C1467.500 23.700 1470 24.300 1471.500 22.800 C1473.300 21 1472.300 17.500 1470.200 17.300 C1468.800 17.200 1468 18 1467.800 19" stroke="#ced0d6" stroke-width="1.6" stroke-linecap="round" stroke-linejoin="round" fill="none" transform="translate(-996.457,661.881) scale(0.807)"/><path d="M1472.500 17.800 C1475 20 1475 25.500 1472 28.500 C1470.800 29.700 1469.300 30.400 1467.800 30.500" stroke="#ced0d6" stroke-width="1.6" stroke-linecap="round" stroke-linejoin="round" fill="none" transform="translate(-996.457,661.881) scale(0.807)"/><path d="M1451 23.600 C1450.300 26 1451 28.500 1452.600 29.700 C1454.800 31 1457.500 29.800 1459.600 27.200" stroke="#ced0d6" stroke-width="1.6" stroke-linecap="round" stroke-linejoin="round" fill="none" transform="translate(-996.457,661.881) scale(0.807)"/><path d="M1445.500 38.400 H1449.300 C1449.300 36.500 1450.300 35 1451.600 35 C1453 35 1454.300 36.500 1454.500 38.400 H1457.200" stroke="#ced0d6" stroke-width="1.6" stroke-linecap="round" stroke-linejoin="round" fill="none" transform="translate(-996.457,661.881) scale(0.807)"/><circle cx="1463.600" cy="26.500" r="1.100" fill="#ced0d6" transform="translate(-996.457,661.881) scale(0.807)"/><path d="M184.10 688.80 H192.90 L188.70 693.30 L192.90 697.80 H184.10 Z" stroke="#b07ce8" stroke-width="1.700" fill="#2b2d30" stroke-linejoin="round"/></svg>
<div class="t" style="left:199.5px;top:676px;font-size:19.5px;color:#dfe1e5;letter-spacing:0.146px;">build.gradle.kts</div>
<svg class="i" style="left:171px;top:713px;" width="22" height="20" viewBox="0 0 22 20" fill="none"><path d="M2.500 3 H19.500 M2.500 7.700 H15 M2.500 12.400 H19.500 M2.500 17.100 H12" stroke="#ced0d6" stroke-width="1.5" stroke-linecap="round" stroke-linejoin="round" fill="none" /></svg>
<div class="t" style="left:199.5px;top:712px;font-size:19.5px;color:#dfe1e5;letter-spacing:0.226px;">proguard-rules.pro</div>
<svg class="i" style="left:115.5px;top:751px;" width="12" height="16" viewBox="0 0 12 16" fill="none"><path d="M3 2.500 L9 8 L3 13.500" stroke="#9da0a8" stroke-width="1.6" stroke-linecap="round" stroke-linejoin="round" fill="none" /></svg>
<svg class="i" style="left:143px;top:749.5px;" width="22" height="19" viewBox="0 0 22 19" fill="none"><path d="M1.500 3.800 C1.500 2.600 2.300 1.800 3.500 1.800 H7.800 C8.500 1.800 9 2 9.400 2.500 L11.300 4.800 H18.500 C19.700 4.800 20.500 5.600 20.500 6.800 V15.200 C20.500 16.400 19.700 17.200 18.500 17.200 H3.500 C2.300 17.200 1.500 16.400 1.500 15.200 Z" stroke="#ced0d6" stroke-width="1.5" stroke-linecap="round" stroke-linejoin="round" fill="#43454a" /></svg>
<div class="t" style="left:171px;top:748px;font-size:19.5px;color:#dfe1e5;letter-spacing:0.049px;">gradle</div>
<svg class="i" style="left:142.5px;top:784px;" width="22" height="22" viewBox="0 0 22 22" fill="none"><circle cx="11" cy="11" r="9.300" stroke="#ced0d6" stroke-width="1.500" fill="#43454a"/><path d="M4.500 17.500 L17.500 4.500" stroke="#ced0d6" stroke-width="1.5" stroke-linecap="round" stroke-linejoin="round" fill="none" /></svg>
<div class="t" style="left:171px;top:784px;font-size:19.5px;color:#dfe1e5;letter-spacing:0.278px;">.gitignore</div>
<svg class="i" style="left:139px;top:818px" width="30" height="28" viewBox="139 818 30 28" fill="none"><path d="M1445.500 38.400 C1445.300 31.500 1447.500 26.500 1451 23.600 C1454.500 20.300 1460 20 1465.400 22.600 C1467.500 23.700 1470 24.300 1471.500 22.800 C1473.300 21 1472.300 17.500 1470.200 17.300 C1468.800 17.200 1468 18 1467.800 19" stroke="#ced0d6" stroke-width="1.6" stroke-linecap="round" stroke-linejoin="round" fill="none" transform="translate(-1024.957,805.881) scale(0.807)"/><path d="M1472.500 17.800 C1475 20 1475 25.500 1472 28.500 C1470.800 29.700 1469.300 30.400 1467.800 30.500" stroke="#ced0d6" stroke-width="1.6" stroke-linecap="round" stroke-linejoin="round" fill="none" transform="translate(-1024.957,805.881) scale(0.807)"/><path d="M1451 23.600 C1450.300 26 1451 28.500 1452.600 29.700 C1454.800 31 1457.500 29.800 1459.600 27.200" stroke="#ced0d6" stroke-width="1.6" stroke-linecap="round" stroke-linejoin="round" fill="none" transform="translate(-1024.957,805.881) scale(0.807)"/><path d="M1445.500 38.400 H1449.300 C1449.300 36.500 1450.300 35 1451.600 35 C1453 35 1454.300 36.500 1454.500 38.400 H1457.200" stroke="#ced0d6" stroke-width="1.6" stroke-linecap="round" stroke-linejoin="round" fill="none" transform="translate(-1024.957,805.881) scale(0.807)"/><circle cx="1463.600" cy="26.500" r="1.100" fill="#ced0d6" transform="translate(-1024.957,805.881) scale(0.807)"/><path d="M155.60 832.80 H164.40 L160.20 837.30 L164.40 841.80 H155.60 Z" stroke="#b07ce8" stroke-width="1.700" fill="#2b2d30" stroke-linejoin="round"/></svg>
<div class="t" style="left:171px;top:820px;font-size:19.5px;color:#dfe1e5;letter-spacing:0.146px;">build.gradle.kts</div>
<svg class="i" style="left:142.5px;top:856px;" width="22" height="22" viewBox="0 0 22 22" fill="none"><path d="M9.00 1.61 L13.00 1.61 L13.58 4.06 L15.72 5.30 L18.13 4.58 L20.13 8.03 L18.30 9.77 L18.30 12.23 L20.13 13.97 L18.13 17.42 L15.72 16.70 L13.58 17.94 L13.00 20.39 L9.00 20.39 L8.42 17.94 L6.28 16.70 L3.87 17.42 L1.87 13.97 L3.70 12.23 L3.70 9.77 L1.87 8.03 L3.87 4.58 L6.28 5.30 L8.42 4.06 Z" stroke="#ced0d6" stroke-width="1.5" stroke-linecap="round" stroke-linejoin="round" fill="none" /><circle cx="11" cy="11" r="3.200" stroke="#ced0d6" stroke-width="1.500"/></svg>
<div class="t" style="left:170.5px;top:856px;font-size:19.5px;color:#dfe1e5;letter-spacing:0.127px;">gradle.properties</div>
<svg class="i" style="left:142.5px;top:894px;" width="22" height="20" viewBox="0 0 22 20" fill="none"><rect x="1.500" y="1.500" width="19" height="16" rx="2" stroke="#ced0d6" stroke-width="1.500" fill="#393b40"/><path d="M5.500 6 L9 9.300 L5.500 12.600 M10.500 13.500 H15.500" stroke="#ced0d6" stroke-width="1.5" stroke-linecap="round" stroke-linejoin="round" fill="none" /></svg>
<div class="t" style="left:170.5px;top:892px;font-size:19.5px;color:#dfe1e5;letter-spacing:0.174px;">gradlew</div>
<svg class="i" style="left:142.5px;top:929px;" width="22" height="20" viewBox="0 0 22 20" fill="none"><path d="M2.500 3 H19.500 M2.500 7.700 H15 M2.500 12.400 H19.500 M2.500 17.100 H12" stroke="#ced0d6" stroke-width="1.5" stroke-linecap="round" stroke-linejoin="round" fill="none" /></svg>
<div class="t" style="left:170.5px;top:928px;font-size:19.5px;color:#dfe1e5;letter-spacing:0.251px;">gradlew.bat</div>
<svg class="i" style="left:142.5px;top:964px;" width="22" height="22" viewBox="0 0 22 22" fill="none"><path d="M9.00 1.61 L13.00 1.61 L13.58 4.06 L15.72 5.30 L18.13 4.58 L20.13 8.03 L18.30 9.77 L18.30 12.23 L20.13 13.97 L18.13 17.42 L15.72 16.70 L13.58 17.94 L13.00 20.39 L9.00 20.39 L8.42 17.94 L6.28 16.70 L3.87 17.42 L1.87 13.97 L3.70 12.23 L3.70 9.77 L1.87 8.03 L3.87 4.58 L6.28 5.30 L8.42 4.06 Z" stroke="#ced0d6" stroke-width="1.5" stroke-linecap="round" stroke-linejoin="round" fill="none" /><circle cx="11" cy="11" r="3.200" stroke="#ced0d6" stroke-width="1.500"/></svg>
<div class="t" style="left:170.5px;top:964px;font-size:19.5px;color:#dfe1e5;letter-spacing:0.017px;">local.properties</div>
<svg class="i" style="left:139px;top:998px" width="30" height="28" viewBox="139 998 30 28" fill="none"><path d="M1445.500 38.400 C1445.300 31.500 1447.500 26.500 1451 23.600 C1454.500 20.300 1460 20 1465.400 22.600 C1467.500 23.700 1470 24.300 1471.500 22.800 C1473.300 21 1472.300 17.500 1470.200 17.300 C1468.800 17.200 1468 18 1467.800 19" stroke="#ced0d6" stroke-width="1.6" stroke-linecap="round" stroke-linejoin="round" fill="none" transform="translate(-1024.957,985.881) scale(0.807)"/><path d="M1472.500 17.800 C1475 20 1475 25.500 1472 28.500 C1470.800 29.700 1469.300 30.400 1467.800 30.500" stroke="#ced0d6" stroke-width="1.6" stroke-linecap="round" stroke-linejoin="round" fill="none" transform="translate(-1024.957,985.881) scale(0.807)"/><path d="M1451 23.600 C1450.300 26 1451 28.500 1452.600 29.700 C1454.800 31 1457.500 29.800 1459.600 27.200" stroke="#ced0d6" stroke-width="1.6" stroke-linecap="round" stroke-linejoin="round" fill="none" transform="translate(-1024.957,985.881) scale(0.807)"/><path d="M1445.500 38.400 H1449.300 C1449.300 36.500 1450.300 35 1451.600 35 C1453 35 1454.300 36.500 1454.500 38.400 H1457.200" stroke="#ced0d6" stroke-width="1.6" stroke-linecap="round" stroke-linejoin="round" fill="none" transform="translate(-1024.957,985.881) scale(0.807)"/><circle cx="1463.600" cy="26.500" r="1.100" fill="#ced0d6" transform="translate(-1024.957,985.881) scale(0.807)"/><path d="M155.60 1012.80 H164.40 L160.20 1017.30 L164.40 1021.80 H155.60 Z" stroke="#b07ce8" stroke-width="1.700" fill="#2b2d30" stroke-linejoin="round"/></svg>
<div class="t" style="left:170.5px;top:1000px;font-size:19.5px;color:#dfe1e5;letter-spacing:-0.062px;">settings.gradle.kts</div>
<svg class="i" style="left:87.5px;top:1039px;" width="12" height="16" viewBox="0 0 12 16" fill="none"><path d="M3 2.500 L9 8 L3 13.500" stroke="#9da0a8" stroke-width="1.6" stroke-linecap="round" stroke-linejoin="round" fill="none" /></svg>
<svg class="i" style="left:114.5px;top:1037px;" width="22" height="20" viewBox="0 0 22 20" fill="none"><path d="M2 17.500 V7.500 H7.500 V2.500 H13.500 V7.500 H19.500 V17.500 Z" stroke="#ced0d6" stroke-width="1.5" stroke-linecap="round" stroke-linejoin="round" fill="#43454a" /><path d="M7.500 7.500 V17.500 M13.500 7.500 V17.500" stroke="#ced0d6" stroke-width="1.5" stroke-linecap="round" stroke-linejoin="round" fill="none" /></svg>
<div class="t" style="left:142.5px;top:1036px;font-size:19.5px;color:#dfe1e5;letter-spacing:-0.319px;">External Libraries</div>
<svg class="i" style="left:113.5px;top:1073px;" width="24" height="20" viewBox="0 0 24 20" fill="none"><path d="M2.500 5.500 H11 M2.500 9.700 H12 M2.500 13.900 H19 M2.500 18.100 H15" stroke="#ced0d6" stroke-width="1.5" stroke-linecap="round" stroke-linejoin="round" fill="none" /><circle cx="18" cy="3" r="5.200" fill="#548af7"/><path d="M18 0.300 V3 L20 4.300" stroke="#2b2d30" stroke-width="1.2" stroke-linecap="round" stroke-linejoin="round" fill="none" /></svg>
<div class="t" style="left:142.5px;top:1072px;font-size:19.5px;color:#dfe1e5;letter-spacing:-0.562px;">Scratches and Consoles</div>
<div class="b" style="left:65px;top:1205px;width:395px;height:12px;background:#45474b;"></div>
<div class="b" style="left:499px;top:62px;width:2px;height:1156px;background:#2b2d30;"></div>
<div class="b" style="left:500px;top:62px;width:1px;height:1156px;background:#1e1f22;"></div>
<!-- part_editor -->
<div class="b" style="left:501px;top:122.3px;width:1326px;height:1.4px;background:#3b3d42;"></div>
<div class="b" style="left:501px;top:117.3px;width:244px;height:5.7px;background:#5a5d63;border-radius:3px;"></div>
<svg class="i" style="left:520.5px;top:81px;" width="22" height="22" viewBox="0 0 22 22" fill="none"><circle cx="11" cy="11" r="9.600" stroke="#548af7" stroke-width="1.600" fill="#25324d"/><path d="M14.800 7.800 C13.800 6.600 12.600 6.200 11.300 6.200 C8.500 6.200 6.700 8.200 6.700 11 C6.700 13.800 8.500 15.800 11.300 15.800 C12.600 15.800 13.800 15.400 14.800 14.200" stroke="#548af7" stroke-width="1.7" stroke-linecap="round" stroke-linejoin="round" fill="none" /></svg>
<div class="t" style="left:551.5px;top:81px;font-size:19.5px;color:#dfe1e5;letter-spacing:0.103px;">MainActivity.java</div>
<svg class="i" style="left:715.5px;top:86px;" width="12" height="12" viewBox="0 0 12 12" fill="none"><path d="M1.500 1.500 L10.500 10.500 M10.500 1.500 L1.500 10.500" stroke="#868a91" stroke-width="1.4" stroke-linecap="round" stroke-linejoin="round" fill="none" /></svg>
<svg class="i" style="left:762.5px;top:82px;" width="20" height="20" viewBox="0 0 20 20" fill="none"><rect x="1.200" y="1.200" width="17.600" height="17.600" rx="2.500" stroke="#4cc27a" stroke-width="1.400" fill="#253627"/><path d="M5.500 14.500 V5.800 L10 12 L14.500 5.800 V14.500" stroke="#4cc27a" stroke-width="1.5" stroke-linecap="round" stroke-linejoin="round" fill="none" /></svg>
<div class="t" style="left:793.5px;top:81px;font-size:19.5px;color:#dfe1e5;letter-spacing:0.150px;">AndroidManifest.xml</div>
<svg class="i" style="left:1795px;top:81px;" width="6" height="22" viewBox="0 0 6 22" fill="none"><circle cx="3" cy="3.500" r="1.600" fill="#ced0d6"/><circle cx="3" cy="11" r="1.600" fill="#ced0d6"/><circle cx="3" cy="18.500" r="1.600" fill="#ced0d6"/></svg>
<svg class="i" style="left:1796.5px;top:135.5px;" width="20" height="16" viewBox="0 0 20 16" fill="none"><path d="M2.500 8 L7.500 13 L17.500 2.500" stroke="#4e9a54" stroke-width="2.6" stroke-linecap="round" stroke-linejoin="round" fill="none" /></svg>
<div class="b" style="left:501px;top:453px;width:1326px;height:33px;background:#26282e;"></div>
<div class="b" style="left:1017px;top:453px;width:156px;height:33px;background:#373b39;"></div>
<div class="b" style="left:629.5px;top:123.5px;width:2px;height:1081.5px;background:#303236;"></div>
<div class="b" style="left:679px;top:387px;width:1px;height:264px;background:#36383d;"></div>
<div class="b" style="left:727px;top:519px;width:1px;height:99px;background:#36383d;"></div>
<div class="c" style="left:500px;width:49px;text-align:right;top:124.5px;color:#4b5059">1</div>
<div class="c" style="left:500px;width:49px;text-align:right;top:157.5px;color:#4b5059">2</div>
<div class="c" style="left:500px;width:49px;text-align:right;top:190.5px;color:#4b5059">3</div>
<div class="c" style="left:500px;width:49px;text-align:right;top:223.5px;color:#4b5059">10</div>
<div class="c" style="left:500px;width:49px;text-align:right;top:256.5px;color:#4b5059">11</div>
<div class="c" style="left:500px;width:49px;text-align:right;top:289.5px;color:#4b5059">12</div>
<div class="c" style="left:500px;width:49px;text-align:right;top:322.5px;color:#4b5059">13</div>
<div class="c" style="left:500px;width:49px;text-align:right;top:355.5px;color:#4b5059">14</div>
<div class="c" style="left:500px;width:49px;text-align:right;top:388.5px;color:#4b5059">15</div>
<div class="c" style="left:500px;width:49px;text-align:right;top:421.5px;color:#4b5059">16</div>
<div class="c" style="left:500px;width:49px;text-align:right;top:454.5px;color:#a1a3ab">17</div>
<div class="c" style="left:500px;width:49px;text-align:right;top:487.5px;color:#4b5059">18</div>
<div class="c" style="left:500px;width:49px;text-align:right;top:520.5px;color:#4b5059">19</div>
<div class="c" style="left:500px;width:49px;text-align:right;top:553.5px;color:#4b5059">20</div>
<div class="c" style="left:500px;width:49px;text-align:right;top:586.5px;color:#4b5059">21</div>
<div class="c" style="left:500px;width:49px;text-align:right;top:619.5px;color:#4b5059">22</div>
<div class="c" style="left:500px;width:49px;text-align:right;top:652.5px;color:#4b5059">23</div>
<div class="c" style="left:500px;width:49px;text-align:right;top:685.5px;color:#4b5059">24</div>
<svg class="i" style="left:615px;top:199.5px;" width="10" height="14" viewBox="0 0 10 14" fill="none"><path d="M2.500 2 L7.500 7 L2.500 12" stroke="#868a91" stroke-width="1.3" stroke-linecap="round" stroke-linejoin="round" fill="none" /></svg>
<div class="b" style="left:717px;top:189px;width:36px;height:33px;background:#393b40;"></div>
<svg class="i" style="left:556.8px;top:260.5px;" width="20" height="22" viewBox="0 0 20 22" fill="none"><path d="M2.500 2.500 C2.500 1.800 3.200 1.500 3.800 1.800 L17.500 10 C18.100 10.400 18.100 11.400 17.500 11.800 L3.800 20.200 C3.200 20.500 2.500 20.200 2.500 19.500 Z" stroke="#5aa160" stroke-width="1.6" stroke-linecap="round" stroke-linejoin="round" fill="#263a29" /></svg>
<svg class="i" style="left:582px;top:263.5px;" width="26" height="16" viewBox="0 0 26 16" fill="none"><path d="M7 2.500 L1.500 8 L7 13.500 M19 2.500 L24.500 8 L19 13.500 M15.500 1 L10.500 15" stroke="#c77d55" stroke-width="1.7" stroke-linecap="round" stroke-linejoin="round" fill="none" /></svg>
<svg class="i" style="left:555px;top:358.2px;" width="22" height="22" viewBox="0 0 22 22" fill="none"><circle cx="9.500" cy="12.500" r="7" stroke="#548af7" stroke-width="1.600" fill="#25324d"/><circle cx="9.500" cy="12.500" r="2.800" stroke="#548af7" stroke-width="1.500"/><path d="M18.500 10 V2.500 M15.800 5 L18.500 2.300 L21.200 5" stroke="#db5c5c" stroke-width="1.5" stroke-linecap="round" stroke-linejoin="round" fill="none" /></svg>
<svg class="i" style="left:645.5px;top:457.5px;" width="18" height="24" viewBox="0 0 18 24" fill="none"><path d="M9 1.200 C4.600 1.200 1.500 4.400 1.500 8.300 C1.500 11 3 12.800 4.300 14.200 C5 15 5.300 15.800 5.300 16.800 H12.700 C12.700 15.800 13 15 13.700 14.200 C15 12.800 16.500 11 16.500 8.300 C16.500 4.400 13.400 1.200 9 1.200 Z" fill="#f2c55c"/><path d="M5.500 19 H12.500 M6.500 21.700 H11.500" stroke="#ced0d6" stroke-width="1.500" stroke-linecap="round"/></svg>
<div class="c" style="left:633px;top:124.5px"><span class="k">package</span> com.smali.secretchallenge;</div>
<div class="c" style="left:633px;top:190.5px"><span class="k">import</span> <span style="color:#868a91">...</span></div>
<div class="c" style="left:633px;top:256.5px"><span class="k">public class</span> MainActivity <span class="k">extends</span> AppCompatActivity {</div>
<div class="c" style="left:681px;top:322.5px"><span class="a">@Override</span></div>
<div class="c" style="left:681px;top:355.5px"><span class="k">protected void</span> <span class="m">onCreate</span>(Bundle savedInstanceState) {</div>
<div class="c" style="left:729px;top:388.5px"><span class="k">super</span>.onCreate(savedInstanceState);</div>
<div class="c" style="left:729px;top:421.5px">EdgeToEdge.<span class="it">enable</span>(</div>
<div class="c" style="left:729px;top:454.5px">setContentView(R.layout.<span class="f it">activity_main</span>);</div>
<div class="c" style="left:729px;top:487.5px">ViewCompat.<span class="it">setOnApplyWindowInsetsListener</span>(findViewById(R.id.main), (v, insets) -> {</div>
<div class="c" style="left:777px;top:520.5px">Insets systemBars = insets.getInsets(WindowInsetsCompat.Type.systemBars());</div>
<div class="c" style="left:777px;top:553.5px">v.setPadding(systemBars.<span class="f">left</span>, systemBars.<span class="f">top</span>, systemBars.<span class="f">right</span>, systemBars.<span class="f">bottom</span>);</div>
<div class="c" style="left:777px;top:586.5px"><span class="k">return</span> insets;</div>
<div class="c" style="left:729px;top:619.5px">});</div>
<div class="c" style="left:681px;top:652.5px">}</div>
<div class="c" style="left:633px;top:685.5px">}</div>
<div class="b" style="left:947.5px;top:423px;width:238.5px;height:26.7px;background:#2b2d30;border-radius:5px;"></div>
<div class="t" style="left:956.5px;top:425px;font-size:18.5px;color:#6f737a;letter-spacing:0.308px;">$this$enableEdgeToEdge:</div>
<div class="c" style="left:1189.5px;top:421.5px"><span class="k">this</span>);</div>
<div class="b" style="left:635px;top:1205px;width:605px;height:12px;background:#3f4145;"></div>
<div class="b" style="left:1769px;top:488px;width:58px;height:30px;background:#2b2d30;"></div>
<div class="b" style="left:1769px;top:488px;width:57px;height:30px;overflow:hidden"><div class="t" style="left:-30px;top:3.5px;font-size:19.5px;color:#868a91;">InsetsCom</div></div>
<div class="b" style="left:1805px;top:492px;width:22px;height:3px;background:#5e8a75;"></div>
<!-- part_emu -->
<div class="b" style="left:1229.5px;top:90px;width:539.5px;height:1157px;background:#2b2d30;border:1.800px solid #45474c;border-radius:13px;box-sizing:border-box;box-shadow:0 4px 14px rgba(0,0,0,0.35);"></div>
<svg class="i" style="left:1254.5px;top:114.5px;" width="22" height="22" viewBox="0 0 22 22" fill="none"><path d="M8.500 18.500H4.200a1.400 1.400 0 0 1-1.400-1.400V3.900a1.400 1.400 0 0 1 1.400-1.400h7.600a1.400 1.400 0 0 1 1.400 1.400V8" stroke="#ced0d6" stroke-width="1.300" fill="none"/>
<path d="M6.500 5.200h3" stroke="#ced0d6" stroke-width="1.300" stroke-linecap="round"/>
<rect x="8.600" y="10.600" width="10.800" height="6.400" rx="1.200" stroke="#a571e6" stroke-width="1.400" fill="#2b2d30"/>
<path d="M9.500 19.700h9" stroke="#a571e6" stroke-width="1.400" stroke-linecap="round"/>
<circle cx="18.300" cy="19.200" r="3.100" fill="#14e03c" stroke="#2b2d30" stroke-width="1"/></svg>
<div class="t" style="left:1282.5px;top:114px;font-size:19.5px;color:#dfe1e5;letter-spacing:-0.398px;">Pixel 9 Pro API 36</div>
<svg class="i" style="left:1451px;top:120px;" width="12" height="12" viewBox="0 0 12 12" fill="none"><path d="M1.500 1.500 L10.500 10.500 M10.500 1.500 L1.500 10.500" stroke="#868a91" stroke-width="1.4" stroke-linecap="round" stroke-linejoin="round" fill="none" /></svg>
<svg class="i" style="left:1487px;top:114px;" width="22" height="22" viewBox="0 0 22 22" fill="none"><path d="M11 1.500 V20.500 M1.500 11 H20.500" stroke="#ced0d6" stroke-width="1.7" stroke-linecap="round" stroke-linejoin="round" fill="none" /></svg>
<svg class="i" style="left:1645px;top:115px;" width="20" height="20" viewBox="0 0 20 20" fill="none"><rect x="1.500" y="1.500" width="17" height="17" rx="2" stroke="#ced0d6" stroke-width="1.500"/><path d="M13 7 L7 13 M7 8.500 V13 H11.500" stroke="#ced0d6" stroke-width="1.5" stroke-linecap="round" stroke-linejoin="round" fill="none" /></svg>
<svg class="i" style="left:1691px;top:114px;" width="6" height="22" viewBox="0 0 6 22" fill="none"><circle cx="3" cy="3.500" r="1.600" fill="#ced0d6"/><circle cx="3" cy="11" r="1.600" fill="#ced0d6"/><circle cx="3" cy="18.500" r="1.600" fill="#ced0d6"/></svg>
<div class="b" style="left:1723px;top:124px;width:20px;height:2px;background:#ced0d6;"></div>
<div class="b" style="left:1234px;top:154.5px;width:530px;height:1.5px;background:#1e1f22;"></div>
<div class="b" style="left:1233.5px;top:151px;width:246px;height:5px;background:#3574f0;border-radius:3px;"></div>
<svg class="i" style="left:1253px;top:171px;" width="22" height="22" viewBox="0 0 22 22" fill="none"><path d="M7 4 A8.500 8.500 0 1 0 15 4 M11 1.500 V10" stroke="#ced0d6" stroke-width="1.5" stroke-linecap="round" stroke-linejoin="round" fill="none" /></svg>
<svg class="i" style="left:1290.5px;top:171px;" width="24" height="22" viewBox="0 0 24 22" fill="none"><path d="M2 8 H6 L11.500 3.500 V18.500 L6 14 H2 Z" stroke="#ced0d6" stroke-width="1.5" stroke-linecap="round" stroke-linejoin="round" fill="none" /><path d="M14.500 7.500 C16 9.500 16 12.500 14.500 14.500 M17.500 4.500 C20.500 8 20.500 14 17.500 17.500" stroke="#ced0d6" stroke-width="1.5" stroke-linecap="round" stroke-linejoin="round" fill="none" /></svg>
<svg class="i" style="left:1329.5px;top:171px;" width="20" height="22" viewBox="0 0 20 22" fill="none"><path d="M2 8 H6 L11.500 3.500 V18.500 L6 14 H2 Z" stroke="#ced0d6" stroke-width="1.5" stroke-linecap="round" stroke-linejoin="round" fill="none" /><path d="M14.500 7.500 C16 9.500 16 12.500 14.500 14.500" stroke="#ced0d6" stroke-width="1.5" stroke-linecap="round" stroke-linejoin="round" fill="none" /></svg>
<div class="b" style="left:1366px;top:166.5px;width:2px;height:29.5px;background:#45474c;"></div>
<svg class="i" style="left:1379px;top:171px;" width="24" height="22" viewBox="0 0 24 22" fill="none"><rect x="1.500" y="2" width="11.500" height="18" rx="1.500" stroke="#ced0d6" stroke-width="1.500"/><path d="M6 5 H8.500" stroke="#ced0d6" stroke-width="1.3" stroke-linecap="round" stroke-linejoin="round" fill="none" /><path d="M15.500 20 C21 17.500 22 9.500 17.500 4.200 M14.800 3.800 H17.800 V7" stroke="#548af7" stroke-width="1.5" stroke-linecap="round" stroke-linejoin="round" fill="none" /></svg>
<svg class="i" style="left:1418px;top:171px;" width="24" height="22" viewBox="0 0 24 22" fill="none"><rect x="11" y="2" width="11.500" height="18" rx="1.500" stroke="#ced0d6" stroke-width="1.500"/><path d="M15.500 5 H18" stroke="#ced0d6" stroke-width="1.3" stroke-linecap="round" stroke-linejoin="round" fill="none" /><path d="M8.500 20 C3 17.500 2 9.500 6.500 4.200 M9.200 3.800 H6.200 V7" stroke="#548af7" stroke-width="1.5" stroke-linecap="round" stroke-linejoin="round" fill="none" /></svg>
<div class="b" style="left:1454px;top:166.5px;width:2px;height:29.5px;background:#45474c;"></div>
<svg class="i" style="left:1472px;top:173px;" width="16" height="18" viewBox="0 0 16 18" fill="none"><path d="M13.500 2.500 L2.500 9 L13.500 15.500 Z" stroke="#ced0d6" stroke-width="1.5" stroke-linecap="round" stroke-linejoin="round" fill="none" /></svg>
<svg class="i" style="left:1509.5px;top:173px;" width="18" height="18" viewBox="0 0 18 18" fill="none"><circle cx="9" cy="9" r="7" stroke="#ced0d6" stroke-width="1.500"/></svg>
<svg class="i" style="left:1550.5px;top:175px;" width="14" height="14" viewBox="0 0 14 14" fill="none"><rect x="1.500" y="1.500" width="11" height="11" rx="1" stroke="#ced0d6" stroke-width="1.500"/></svg>
<div class="b" style="left:1582px;top:166.5px;width:2px;height:29.5px;background:#45474c;"></div>
<svg class="i" style="left:1595px;top:171px;" width="24" height="22" viewBox="0 0 24 22" fill="none"><path d="M14 14.500 H3.500 C2.400 14.500 1.500 13.600 1.500 12.500 V5 C1.500 3.900 2.400 3 3.500 3 H18.500 C19.600 3 20.500 3.900 20.500 5 V8" stroke="#ced0d6" stroke-width="1.5" stroke-linecap="round" stroke-linejoin="round" fill="none" /><path d="M5 6.500 H5.100 M8.500 6.500 H8.600 M12 6.500 H12.100 M15.500 6.500 H15.600 M5 9.500 H5.100 M8.500 9.500 H8.600 M12 9.500 H12.100 M6.500 12 H12" stroke="#ced0d6" stroke-width="1.4" stroke-linecap="round" stroke-linejoin="round" fill="none" /><rect x="16.500" y="10.500" width="6" height="9.500" rx="3" stroke="#ced0d6" stroke-width="1.400" fill="#2b2d30"/><path d="M19.500 10.500 V14" stroke="#ced0d6" stroke-width="1.2" stroke-linecap="round" stroke-linejoin="round" fill="none" /></svg>
<div class="b" style="left:1631px;top:166.5px;width:2px;height:29.5px;background:#45474c;"></div>
<svg class="i" style="left:1645px;top:166px" width="30" height="32" viewBox="1645 166 30 32" fill="none"><path d="M1657 190.300 H1653 C1652 190.300 1651.200 189.500 1651.200 188.500 V175.400 C1651.200 174.400 1652 173.600 1653 173.600 H1660.800 C1661.800 173.600 1662.600 174.400 1662.600 175.400 V180.500" stroke="#ced0d6" stroke-width="1.5" stroke-linecap="round" stroke-linejoin="round" fill="none" /><path d="M1655.500 176.600 H1658.300" stroke="#ced0d6" stroke-width="1.3" stroke-linecap="round" stroke-linejoin="round" fill="none" /><path d="M1668.53 187.02 L1668.53 188.78 L1667.05 189.01 L1666.65 189.98 L1667.53 191.19 L1666.29 192.43 L1665.08 191.55 L1664.11 191.95 L1663.88 193.43 L1662.12 193.43 L1661.89 191.95 L1660.92 191.55 L1659.71 192.43 L1658.47 191.19 L1659.35 189.98 L1658.95 189.01 L1657.47 188.78 L1657.47 187.02 L1658.95 186.79 L1659.35 185.82 L1658.47 184.61 L1659.71 183.37 L1660.92 184.25 L1661.89 183.85 L1662.12 182.37 L1663.88 182.37 L1664.11 183.85 L1665.08 184.25 L1666.29 183.37 L1667.53 184.61 L1666.65 185.82 L1667.05 186.79 Z" stroke="#ced0d6" stroke-width="1.4" stroke-linecap="round" stroke-linejoin="round" fill="#2b2d30" /><circle cx="1663" cy="187.900" r="1.500" fill="#ced0d6"/></svg>
<div class="b" style="left:1681px;top:166.5px;width:2px;height:29.5px;background:#45474c;"></div>
<svg class="i" style="left:1720px;top:166px" width="32" height="32" viewBox="1720 166 32 32" fill="none"><path d="M1725 184.300 V175.200 C1725 174.300 1725.700 173.600 1726.600 173.600 H1739.800 C1740.700 173.600 1741.400 174.300 1741.400 175.200" stroke="#ced0d6" stroke-width="1.5" stroke-linecap="round" stroke-linejoin="round" fill="none" /><path d="M1735 187.200 H1730.200 C1729.300 187.200 1728.600 186.500 1728.600 185.600 V178.700 C1728.600 177.800 1729.300 177.100 1730.200 177.100 H1739.800 C1740.700 177.100 1741.400 177.800 1741.400 178.700 V182" stroke="#ced0d6" stroke-width="1.5" stroke-linecap="round" stroke-linejoin="round" fill="none" /><circle cx="1739.300" cy="186.400" r="3.700" stroke="#ced0d6" stroke-width="1.500" fill="#2b2d30"/><path d="M1742 189.200 L1745.300 192.500" stroke="#ced0d6" stroke-width="1.7" stroke-linecap="round" stroke-linejoin="round" fill="none" /></svg>
<svg class="i" style="left:1252px;top:207.5px;" width="24" height="20" viewBox="0 0 24 20" fill="none"><path d="M2 6.500 C2 5.400 2.900 4.500 4 4.500 H7 L8.500 2 H15.500 L17 4.500 H20 C21.100 4.500 22 5.400 22 6.500 V16 C22 17.100 21.100 18 20 18 H4 C2.900 18 2 17.100 2 16 Z" stroke="#ced0d6" stroke-width="1.5" stroke-linecap="round" stroke-linejoin="round" fill="none" /><circle cx="12" cy="11.200" r="3.800" stroke="#ced0d6" stroke-width="1.500"/><circle cx="18.800" cy="7.800" r="0.800" fill="#ced0d6"/></svg>
<svg class="i" style="left:1291px;top:210.5px;" width="24" height="16" viewBox="0 0 24 16" fill="none"><rect x="1.500" y="2" width="14" height="12" rx="1.500" stroke="#ced0d6" stroke-width="1.500"/><path d="M15.500 8 L21.500 3 V13 Z" stroke="#ced0d6" stroke-width="1.5" stroke-linecap="round" stroke-linejoin="round" fill="none" /></svg>
<div class="b" style="left:1327px;top:202px;width:2px;height:29.5px;background:#45474c;"></div>
<svg class="i" style="left:1341px;top:207px;" width="22" height="22" viewBox="0 0 22 22" fill="none"><path d="M4 6 A8.300 8.300 0 1 1 3.200 14" stroke="#ced0d6" stroke-width="1.5" stroke-linecap="round" stroke-linejoin="round" fill="none" /><path d="M3.500 2 V6.500 H8" stroke="#ced0d6" stroke-width="1.5" stroke-linecap="round" stroke-linejoin="round" fill="none" /><path d="M10.500 15 V11 H15" stroke="#ced0d6" stroke-width="1.5" stroke-linecap="round" stroke-linejoin="round" fill="none" /></svg>
<svg class="i" style="left:1388px;top:208px;" width="6" height="20" viewBox="0 0 6 20" fill="none"><circle cx="3" cy="2.700" r="1.500" fill="#ced0d6"/><circle cx="3" cy="10" r="1.500" fill="#ced0d6"/><circle cx="3" cy="17.300" r="1.500" fill="#ced0d6"/></svg>
<div class="b" style="left:1234px;top:243px;width:530px;height:1.2px;background:#1e1f22;"></div>
<!-- part_phone -->
<div class="b" style="left:1729px;top:517px;width:6.3px;height:77px;background:#2b2d30;border-radius:3px;border:1.300px solid #e2e2e2;box-sizing:border-box;"></div>
<div class="b" style="left:1729px;top:640px;width:6.3px;height:141px;background:#2b2d30;border-radius:3px;border:1.300px solid #e2e2e2;box-sizing:border-box;"></div>
<div class="b" style="left:1263px;top:245px;width:469.5px;height:998px;background:#c4c4c4;border-radius:79px;"></div>
<div class="b" style="left:1264px;top:246px;width:467.5px;height:996px;background:#808080;border-radius:78px;"></div>
<div class="b" style="left:1265.2px;top:247.2px;width:465.1px;height:993.6px;background:#a6a6a6;border-radius:76.8px;"></div>
<div class="b" style="left:1268px;top:250px;width:459.5px;height:988px;background:#8a8a8a;border-radius:74px;"></div>
<div class="b" style="left:1269.2px;top:251.2px;width:457.1px;height:985.6px;background:#4a4a4a;border-radius:72.8px;"></div>
<div class="b" style="left:1270px;top:252px;width:455.5px;height:984px;background:#b8b8b8;border-radius:72px;"></div>
<div class="b" style="left:1271px;top:253px;width:453.5px;height:982px;background:#1a1a1a;border-radius:71px;"></div>
<div class="b" style="left:1271.7px;top:253.7px;width:452.1px;height:980.6px;background:#000;border-radius:70.3px;"></div>
<div class="b" style="left:1264.5px;top:403px;width:5px;height:9px;background:#6d6f6d;"></div>
<div class="b" style="left:1264.5px;top:1137px;width:5px;height:9px;background:#6d6f6d;"></div>
<div class="b" style="left:1726px;top:403px;width:5px;height:9px;background:#6d6f6d;"></div>
<div class="b" style="left:1493px;top:246px;width:9px;height:5px;background:#6d6f6d;"></div>
<div class="b" style="left:1547px;top:1237px;width:9px;height:5px;background:#6d6f6d;"></div>
<div class="b" style="left:1283px;top:264px;width:428px;height:959px;border-radius:56px;background:#fff;overflow:hidden">
<div class="b" style="left:0px;top:53px;width:429px;height:57px;background:#6200ee;"></div>
<div class="b" style="left:0px;top:110px;width:429px;height:5px;background:linear-gradient(180deg,rgba(0,0,0,0.100),rgba(0,0,0,0));"></div>
</div>
<div class="t" style="left:1311.5px;top:279.5px;font-size:14px;color:#6b6b6b;letter-spacing:-0.184px;">9:42</div>
<svg class="i" style="left:1344.5px;top:284.7px;" width="11" height="13" viewBox="0 0 11 13" fill="none"><path d="M3.600 0.300 H9.300 C10.100 0.300 10.700 0.900 10.700 1.700 V11.300 C10.700 12.100 10.100 12.700 9.300 12.700 H1.700 C0.900 12.700 0.300 12.100 0.300 11.300 V3.600 Z" fill="#696969"/><rect x="4.500" y="1.600" width="4.500" height="2.400" fill="#e8e8e8"/></svg>
<svg class="i" style="left:1366.7px;top:285.75px;" width="10" height="10.5" viewBox="0 0 10 10.5" fill="none"><rect x="0.300" y="0.300" width="9.400" height="9.900" rx="0.800" fill="#696969"/><path d="M3 8 L5 2.500 L7 8 M3.800 6.300 H6.200" stroke="#fff" stroke-width="1.100" fill="none"/></svg>
<svg class="i" style="left:1639.5px;top:284.5px;" width="16" height="13" viewBox="0 0 16 13" fill="none"><path d="M8 12.600 L0.400 3.300 C4.500 -0.500 11.500 -0.500 15.600 3.300 Z" fill="#696969"/></svg>
<svg class="i" style="left:1656.5px;top:284.95px;" width="13" height="12.5" viewBox="0 0 13 12.5" fill="none"><path d="M11.800 1.200 V11.600 H1.400 Z" stroke="#696969" stroke-width="1.100" fill="none"/></svg>
<svg class="i" style="left:1675.75px;top:284.25px;" width="8.5" height="13.5" viewBox="0 0 8.5 13.5" fill="none"><rect x="0.300" y="1.600" width="7.900" height="11.600" rx="1" fill="#696969"/><rect x="2.500" y="0.200" width="3.500" height="2" fill="#696969"/></svg>
<svg class="i" style="left:1481.3px;top:282.6px;" width="32" height="32" viewBox="0 0 32 32" fill="none"><defs><radialGradient id="cam" cx="0.5" cy="0.5" r="0.5"><stop offset="0" stop-color="#2a1f55"/><stop offset="0.220" stop-color="#171033"/><stop offset="0.450" stop-color="#0b0b10"/><stop offset="1" stop-color="#050505"/></radialGradient></defs><circle cx="16" cy="16" r="15.600" fill="#050505"/><circle cx="16" cy="16" r="10" fill="url(#cam)"/><circle cx="17" cy="15" r="1.300" fill="#4a3aa0" opacity="0.800"/></svg>
<div class="t" style="left:1299.8px;top:334px;font-size:19.5px;color:#ffffff;letter-spacing:-0.110px;-webkit-text-stroke:0.550px #fff;">Lab</div>
<div class="b" style="left:1443px;top:1209.5px;width:109px;height:4.5px;background:#5e5e5e;border-radius:2.25px;"></div>
<div class="b" style="left:1697px;top:1050px;width:42px;height:162px;background:#2b2d30;border-radius:6px;border:1px solid #3b3d42;box-sizing:border-box;"></div>
<svg class="i" style="left:1706px;top:1061px;" width="22" height="22" viewBox="0 0 22 22" fill="none"><path d="M11 1.500 V20.500 M1.500 11 H20.500" stroke="#ced0d6" stroke-width="1.5" stroke-linecap="round" stroke-linejoin="round" fill="none" /></svg>
<div class="b" style="left:1707px;top:1110.5px;width:20px;height:1.3px;background:#5a5d63;"></div>
<div class="t" style="left:1706.5px;top:1139.5px;font-size:16.5px;color:#dfe1e5;font-weight:bold;letter-spacing:-1.115px;">1:1</div>
<svg class="i" style="left:1706px;top:1180px;" width="22" height="20" viewBox="0 0 22 20" fill="none"><rect x="1" y="1" width="20" height="18" rx="2" stroke="#5a5d63" stroke-width="1.300" fill="#34363a"/><path d="M6 10 V6 H11 M16 10 V14 H11" stroke="#5a5d63" stroke-width="1.3" stroke-linecap="round" stroke-linejoin="round" fill="none" /></svg>
<!-- part_right -->
<svg class="i" style="left:1838px;top:72px" width="40" height="40" viewBox="1838 72 40 40" fill="none"><path d="M1862 80 C1860.800 79.600 1859.300 79.400 1857.800 79.400 C1853.200 79.400 1850.300 83 1850.300 87.500 V92.500 L1846.800 98.300 C1846.300 99.200 1846.700 99.800 1847.600 99.800 H1868.300 C1869.200 99.800 1869.600 99.200 1869.100 98.300 L1865.500 92.500 V89" stroke="#ced0d6" stroke-width="2" stroke-linecap="round" stroke-linejoin="round" fill="none" /><path d="M1855.300 103.500 C1856.500 105.300 1859.500 105.300 1860.700 103.500" stroke="#ced0d6" stroke-width="2" stroke-linecap="round" stroke-linejoin="round" fill="none" /><circle cx="1867.400" cy="81.500" r="5.500" fill="#db5c5c"/></svg>
<svg class="i" style="left:1838px;top:132px" width="40" height="40" viewBox="1838 132 40 40" fill="none"><path d="M1445.500 38.400 C1445.300 31.500 1447.500 26.500 1451 23.600 C1454.500 20.300 1460 20 1465.400 22.600 C1467.500 23.700 1470 24.300 1471.500 22.800 C1473.300 21 1472.300 17.500 1470.200 17.300 C1468.800 17.200 1468 18 1467.800 19" stroke="#ced0d6" stroke-width="1.95" stroke-linecap="round" stroke-linejoin="round" fill="none" transform="translate(376.32,123.94) scale(1.015)"/><path d="M1472.500 17.800 C1475 20 1475 25.500 1472 28.500 C1469 31 1467.200 31.800 1466.800 34 V38.400 H1463.700 C1463.500 36.500 1462.300 35.300 1461 35.300 C1459.700 35.300 1458.700 36.500 1458.500 38.400" stroke="#ced0d6" stroke-width="1.95" stroke-linecap="round" stroke-linejoin="round" fill="none" transform="translate(376.32,123.94) scale(1.015)"/><path d="M1451 23.600 C1450.300 26 1451 28.500 1452.600 29.700 C1454.800 31 1457.500 29.800 1459.600 27.200" stroke="#ced0d6" stroke-width="1.95" stroke-linecap="round" stroke-linejoin="round" fill="none" transform="translate(376.32,123.94) scale(1.015)"/><path d="M1445.500 38.400 H1449.300 C1449.300 36.500 1450.300 35 1451.600 35 C1453 35 1453.800 36.500 1454 38.400 C1454.200 36.500 1455 35.300 1456.200 35.300 C1457.500 35.300 1458.300 36.500 1458.500 38.400" stroke="#ced0d6" stroke-width="1.95" stroke-linecap="round" stroke-linejoin="round" fill="none" transform="translate(376.32,123.94) scale(1.015)"/><circle cx="1463.600" cy="26.500" r="1.100" fill="#ced0d6" transform="translate(376.32,123.94) scale(1.015)"/></svg>
<svg class="i" style="left:1838px;top:192px" width="40" height="40" viewBox="1838 192 40 40" fill="none"><path d="M1851.500 223.300 H1849.200 C1847.700 223.300 1846.700 222.300 1846.700 220.800 V203.200 C1846.700 201.700 1847.700 200.700 1849.200 200.700 H1859.500 C1861 200.700 1862 201.700 1862 203.200 V212.700" stroke="#ced0d6" stroke-width="2" stroke-linecap="round" stroke-linejoin="round" fill="none" /><path d="M1852.600 205.700 H1856.200" stroke="#ced0d6" stroke-width="1.9" stroke-linecap="round" stroke-linejoin="round" fill="none" /><path d="M1853.500 224.800 C1853.500 220 1857.500 216.500 1862.600 216.500 C1867.700 216.500 1871.800 220 1871.800 224.800 Z M1858.500 217.500 L1856.800 214.400 M1866.800 217.500 L1868.500 214.400" stroke="#ced0d6" stroke-width="2" stroke-linecap="round" stroke-linejoin="round" fill="none" /></svg>
<div class="b" style="left:1835px;top:249px;width:45px;height:45px;background:#3574f0;border-radius:9px;"></div>
<svg class="i" style="left:1838px;top:252px" width="40" height="40" viewBox="1838 252 40 40" fill="none"><path d="M1851 283.200 H1849 C1847.500 283.200 1846.500 282.200 1846.500 280.700 V263 C1846.500 261.500 1847.500 260.500 1849 260.500 H1859.800" stroke="#fff" stroke-width="2.1" stroke-linecap="round" stroke-linejoin="round" fill="none" /><path d="M1852.300 265.800 H1856.200 M1861.100 264.800 V269.200" stroke="#fff" stroke-width="1.9" stroke-linecap="round" stroke-linejoin="round" fill="none" /><rect x="1854" y="272.500" width="15.800" height="7.800" rx="1" stroke="#fff" stroke-width="2.100"/><path d="M1854.300 284.300 H1869.500" stroke="#fff" stroke-width="2.1" stroke-linecap="round" stroke-linejoin="round" fill="none" /><circle cx="1867.200" cy="261.800" r="5.300" fill="#5fad65"/></svg>
<svg class="i" style="left:1844px;top:318px;" width="28" height="28" viewBox="0 0 28 28" fill="none"><path d="M14 1 C14.500 8 17.500 12.500 27 14 C17.500 15.500 14.500 20 14 27 C13.500 20 10.500 15.500 1 14 C10.500 12.500 13.500 8 14 1 Z" fill="#ced0d6"/></svg>
<!-- part_status -->
<svg class="i" style="left:22px;top:1234.8px;" width="13" height="13" viewBox="0 0 13 13" fill="none"><rect x="1.300" y="1.300" width="10.400" height="10.400" rx="2.300" stroke="#548af7" stroke-width="1.600" fill="#25324d"/></svg>
<div class="t" style="left:41px;top:1229px;font-size:19.5px;color:#9da0a8;letter-spacing:-0.844px;">Lab</div>
<svg class="i" style="left:85.5px;top:1233px;" width="10" height="14" viewBox="0 0 10 14" fill="none"><path d="M2 1.500 L8 7 L2 12.500" stroke="#a0a3aa" stroke-width="1.4" stroke-linecap="round" stroke-linejoin="round" fill="none" /></svg>
<svg class="i" style="left:108px;top:1234.8px;" width="13" height="13" viewBox="0 0 13 13" fill="none"><rect x="1.300" y="1.300" width="10.400" height="10.400" rx="2.300" stroke="#548af7" stroke-width="1.600" fill="#25324d"/></svg>
<div class="t" style="left:127px;top:1229px;font-size:19.5px;color:#9da0a8;letter-spacing:0.323px;">app</div>
<svg class="i" style="left:172.5px;top:1233px;" width="10" height="14" viewBox="0 0 10 14" fill="none"><path d="M2 1.500 L8 7 L2 12.500" stroke="#a0a3aa" stroke-width="1.4" stroke-linecap="round" stroke-linejoin="round" fill="none" /></svg>
<div class="t" style="left:197px;top:1229px;font-size:19.5px;color:#9da0a8;letter-spacing:-0.833px;">src</div>
<svg class="i" style="left:232.5px;top:1233px;" width="10" height="14" viewBox="0 0 10 14" fill="none"><path d="M2 1.500 L8 7 L2 12.500" stroke="#a0a3aa" stroke-width="1.4" stroke-linecap="round" stroke-linejoin="round" fill="none" /></svg>
<svg class="i" style="left:256px;top:1234.8px;" width="13" height="13" viewBox="0 0 13 13" fill="none"><rect x="1.300" y="1.300" width="10.400" height="10.400" rx="2.300" stroke="#548af7" stroke-width="1.600" fill="#25324d"/></svg>
<div class="t" style="left:275px;top:1229px;font-size:19.5px;color:#9da0a8;letter-spacing:0.059px;">main</div>
<svg class="i" style="left:330.5px;top:1233px;" width="10" height="14" viewBox="0 0 10 14" fill="none"><path d="M2 1.500 L8 7 L2 12.500" stroke="#a0a3aa" stroke-width="1.4" stroke-linecap="round" stroke-linejoin="round" fill="none" /></svg>
<div class="t" style="left:355px;top:1229px;font-size:19.5px;color:#9da0a8;letter-spacing:-0.566px;">java</div>
<svg class="i" style="left:401.5px;top:1233px;" width="10" height="14" viewBox="0 0 10 14" fill="none"><path d="M2 1.500 L8 7 L2 12.500" stroke="#a0a3aa" stroke-width="1.4" stroke-linecap="round" stroke-linejoin="round" fill="none" /></svg>
<div class="t" style="left:425px;top:1229px;font-size:19.5px;color:#9da0a8;letter-spacing:-0.115px;">com</div>
<svg class="i" style="left:475.5px;top:1233px;" width="10" height="14" viewBox="0 0 10 14" fill="none"><path d="M2 1.500 L8 7 L2 12.500" stroke="#a0a3aa" stroke-width="1.4" stroke-linecap="round" stroke-linejoin="round" fill="none" /></svg>
<div class="t" style="left:499px;top:1229px;font-size:19.5px;color:#9da0a8;letter-spacing:-0.200px;">smali</div>
<svg class="i" style="left:556.5px;top:1233px;" width="10" height="14" viewBox="0 0 10 14" fill="none"><path d="M2 1.500 L8 7 L2 12.500" stroke="#a0a3aa" stroke-width="1.4" stroke-linecap="round" stroke-linejoin="round" fill="none" /></svg>
<div class="t" style="left:580px;top:1229px;font-size:19.5px;color:#9da0a8;letter-spacing:-0.172px;">secretchallenge</div>
<svg class="i" style="left:727.5px;top:1233px;" width="10" height="14" viewBox="0 0 10 14" fill="none"><path d="M2 1.500 L8 7 L2 12.500" stroke="#a0a3aa" stroke-width="1.4" stroke-linecap="round" stroke-linejoin="round" fill="none" /></svg>
<svg class="i" style="left:751px;top:1229px;" width="22" height="22" viewBox="0 0 22 22" fill="none"><circle cx="11" cy="11" r="9.600" stroke="#548af7" stroke-width="1.600" fill="#25324d"/><path d="M14.800 7.800 C13.800 6.600 12.600 6.200 11.300 6.200 C8.500 6.200 6.700 8.200 6.700 11 C6.700 13.800 8.500 15.800 11.300 15.800 C12.600 15.800 13.800 15.400 14.800 14.200" stroke="#548af7" stroke-width="1.7" stroke-linecap="round" stroke-linejoin="round" fill="none" /></svg>
<div class="t" style="left:781px;top:1229px;font-size:19.5px;color:#9da0a8;letter-spacing:0.374px;">MainActivity</div>
<svg class="i" style="left:902.5px;top:1233px;" width="10" height="14" viewBox="0 0 10 14" fill="none"><path d="M2 1.500 L8 7 L2 12.500" stroke="#a0a3aa" stroke-width="1.4" stroke-linecap="round" stroke-linejoin="round" fill="none" /></svg>
<svg class="i" style="left:926px;top:1229px;" width="22" height="22" viewBox="0 0 22 22" fill="none"><circle cx="11" cy="11" r="9.600" stroke="#db5c5c" stroke-width="1.600" fill="#402929"/><path d="M6.500 15 V9 M6.500 10.500 C7.500 8.500 10.500 8.500 11 10.500 V15 M11 10.500 C12 8.500 15 8.500 15.500 10.500 V15" stroke="#db5c5c" stroke-width="1.5" stroke-linecap="round" stroke-linejoin="round" fill="none" /></svg>
<div class="t" style="left:956px;top:1229px;font-size:19.5px;color:#9da0a8;letter-spacing:-0.340px;">onCreate</div>
<svg class="i" style="left:1788px;top:1226px" width="30" height="28" viewBox="1788 1226 30 28" fill="none"><rect x="1794.600" y="1238.600" width="12.800" height="9.800" rx="1.800" stroke="#ced0d6" stroke-width="1.700"/><path d="M1801 1242 V1245" stroke="#ced0d6" stroke-width="1.7" stroke-linecap="round" stroke-linejoin="round" fill="none" /><path d="M1804.600 1238.500 V1236.800 C1804.600 1232.300 1811.700 1232.300 1811.700 1236.800 V1238.800" stroke="#ced0d6" stroke-width="1.7" stroke-linecap="round" stroke-linejoin="round" fill="none" /></svg>
<svg class="i" style="left:1837px;top:1228.5px;" width="24" height="24" viewBox="0 0 24 24" fill="none"><circle cx="12" cy="12" r="9.800" stroke="#ced0d6" stroke-width="1.700"/><path d="M12 6.500 V13" stroke="#ced0d6" stroke-width="2" stroke-linecap="round" stroke-linejoin="round" fill="none" /><circle cx="12" cy="16.800" r="1.300" fill="#ced0d6"/></svg>
<!-- part_arrow -->
<svg class="i" style="left:960px;top:40px" width="60" height="300" viewBox="960 40 60 300"><path d="M988.700 54 L1004.300 78.500 L997.500 78.500 L998.900 332 L982.300 78.500 L974.800 78.500 Z" fill="#fa3636"/></svg>
</div></div>
</body></html>
